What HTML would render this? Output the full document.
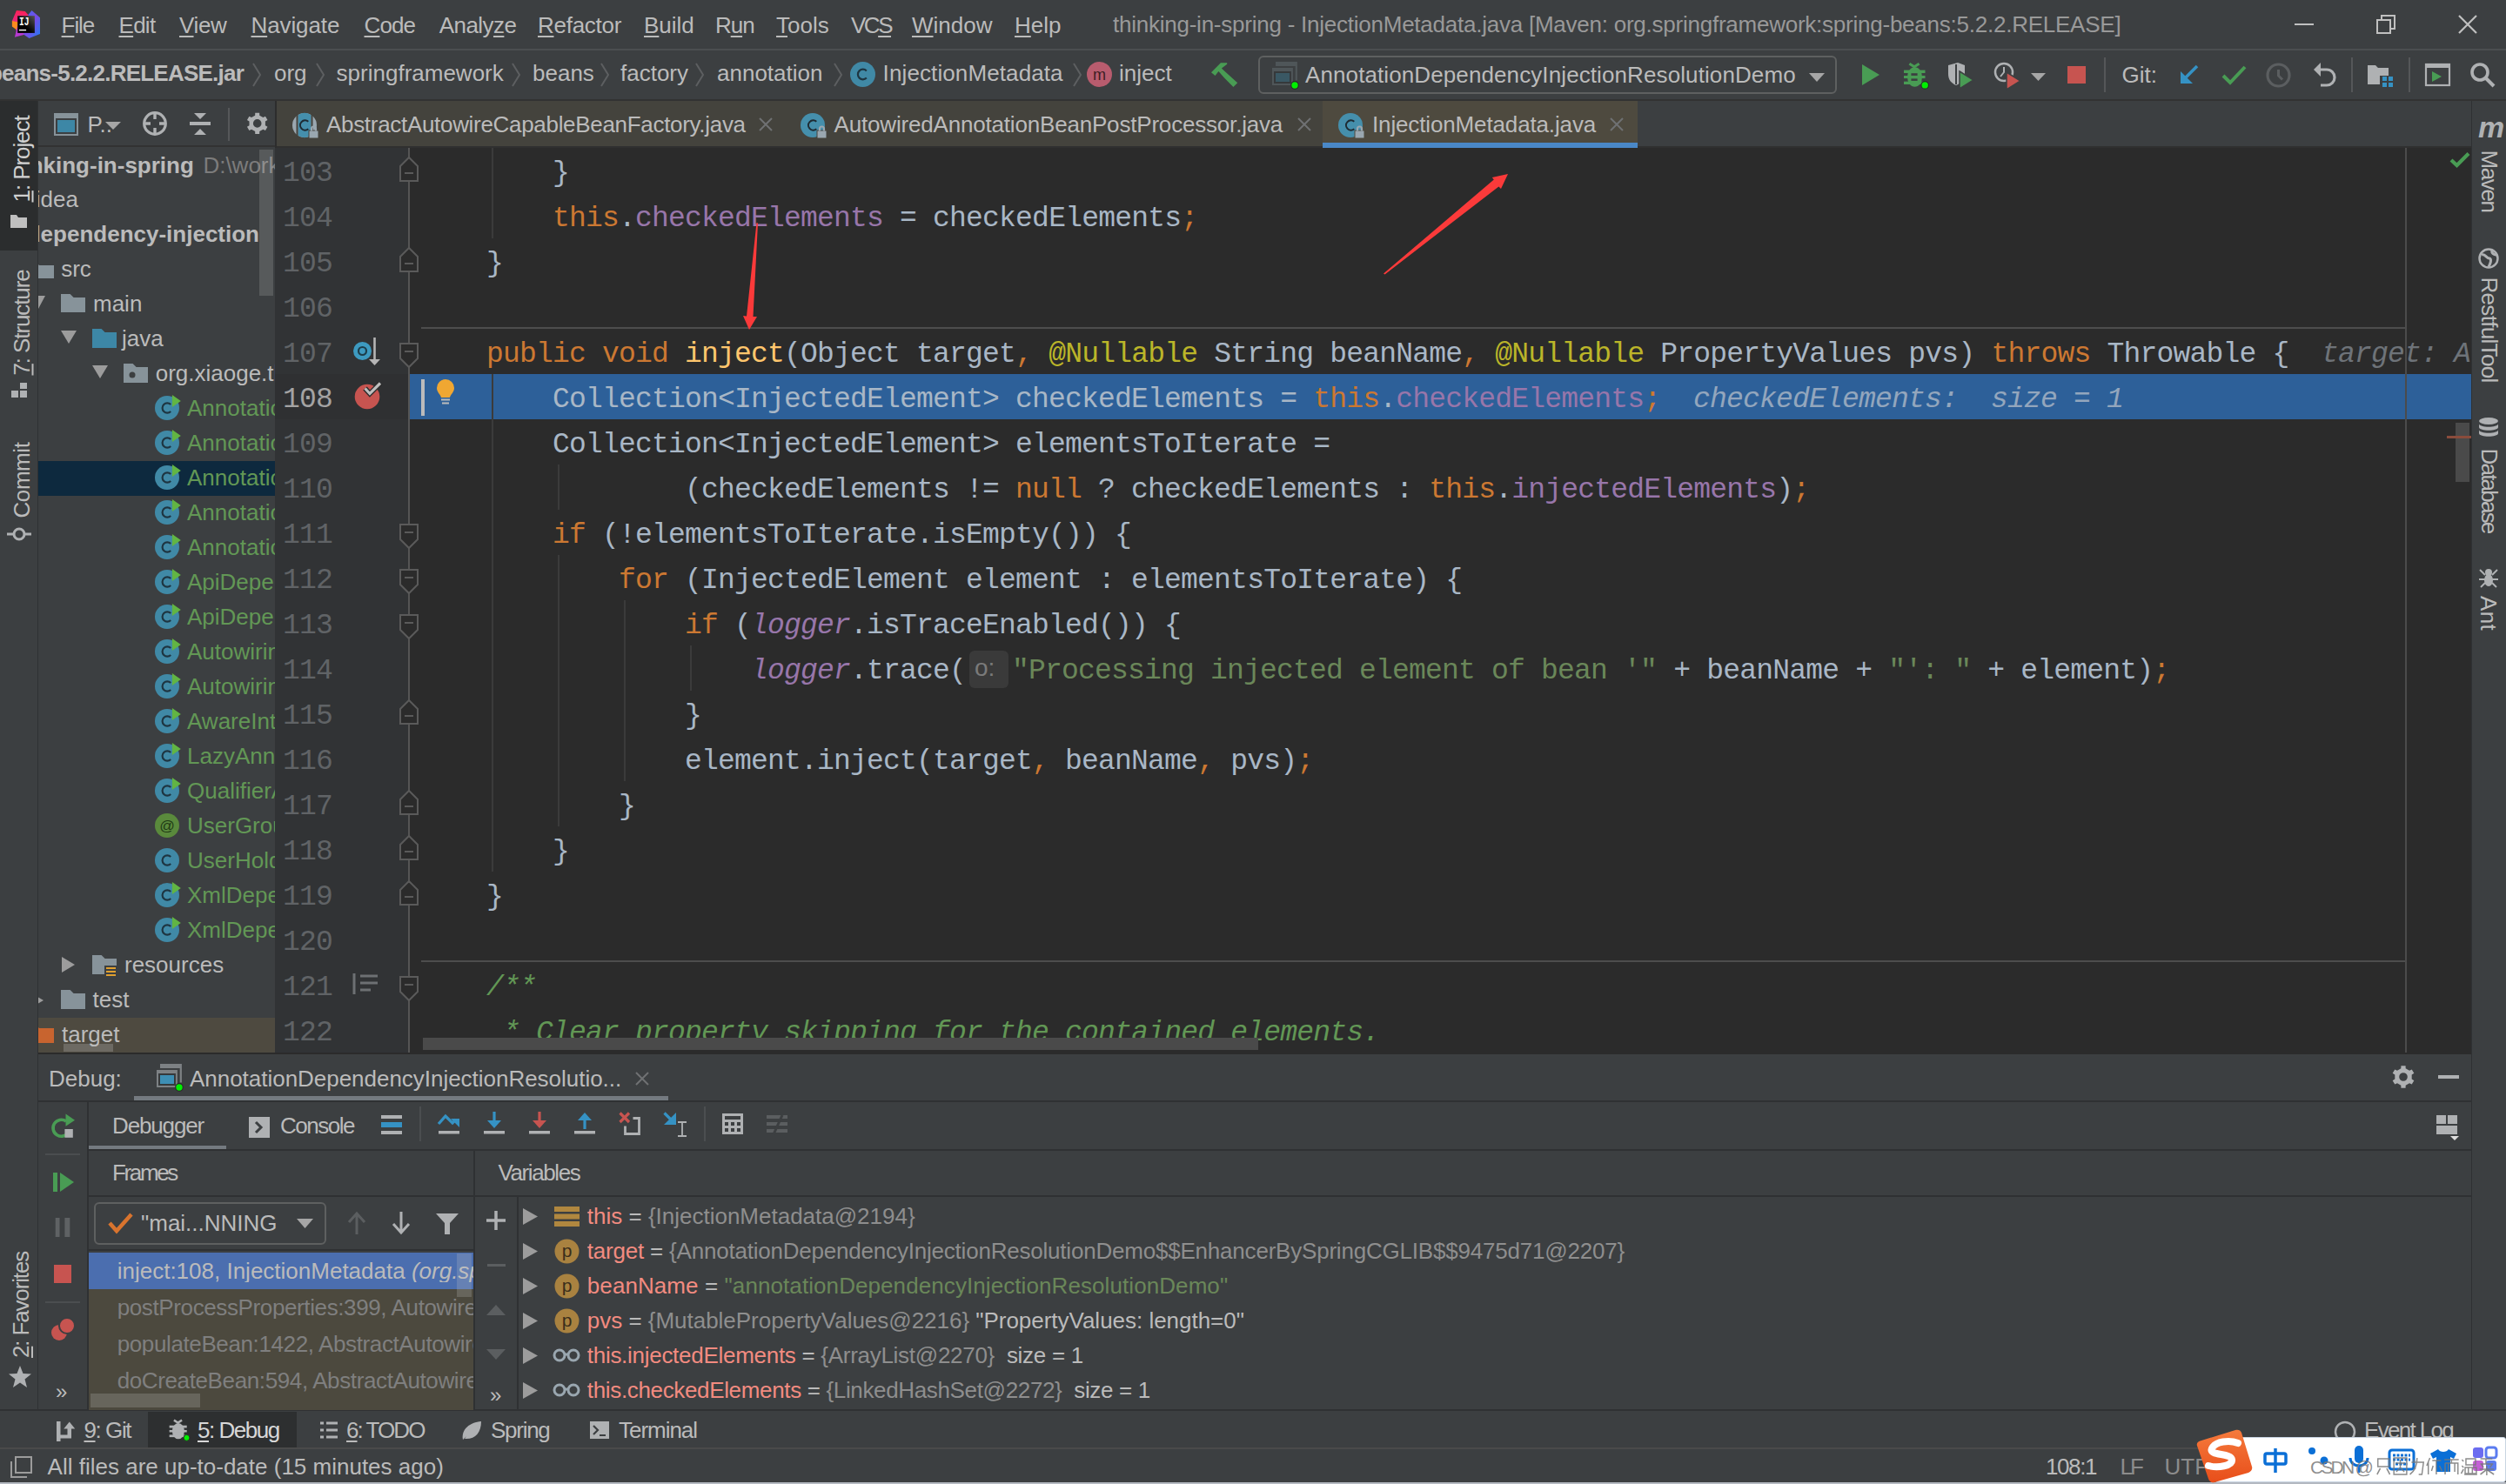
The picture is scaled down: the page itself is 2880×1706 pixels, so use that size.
<!DOCTYPE html>
<html><head><meta charset="utf-8"><title>IntelliJ</title>
<style>
html,body{margin:0;padding:0;}
body{width:2880px;height:1706px;overflow:hidden;position:relative;background:#3c3f41;font-family:"Liberation Sans",sans-serif;}
body div, body svg{position:absolute;}
svg{overflow:visible;}
u{text-decoration:underline;text-decoration-thickness:2px;text-underline-offset:3px;}
</style></head><body>
<div style="left:0px;top:0px;width:2880px;height:56px;background:#3c3f41;"></div>
<div style="left:0px;top:56px;width:2880px;height:2px;background:#4b4e50;"></div>
<div style="left:0px;top:58px;width:2880px;height:56px;background:#3c3f41;"></div>
<div style="left:0px;top:114px;width:2880px;height:2px;background:#323232;"></div>
<div style="left:0px;top:116px;width:43px;height:1505px;background:#3c3f41;"></div>
<div style="left:43px;top:116px;width:1px;height:1505px;background:#2f3133;"></div>
<div style="left:0px;top:116px;width:43px;height:172px;background:#2b2d2e;"></div>
<div style="left:2841px;top:116px;width:39px;height:1505px;background:#3c3f41;"></div>
<div style="left:2840px;top:116px;width:1px;height:1505px;background:#2f3133;"></div>
<div style="left:44px;top:116px;width:272px;height:1094px;background:#3c3f41;"></div>
<div style="left:44px;top:167px;width:272px;height:2px;background:#323232;"></div>
<div style="left:316px;top:116px;width:2524px;height:54px;background:#3c3f41;"></div>
<div style="left:318px;top:116px;width:1202px;height:52px;background:#44433d;"></div>
<div style="left:316px;top:168px;width:2524px;height:2px;background:#303030;"></div>
<div style="left:1520px;top:116px;width:362px;height:48px;background:#4e4a3f;"></div>
<div style="left:1520px;top:164px;width:362px;height:6px;background:#4a88c7;"></div>
<div style="left:316px;top:116px;width:2px;height:54px;background:#2d2d2d;"></div>
<div style="left:316px;top:170px;width:155px;height:1040px;background:#313335;"></div>
<div style="left:471px;top:170px;width:2369px;height:1040px;background:#2b2b2b;"></div>
<div style="left:44px;top:1210px;width:2796px;height:2px;background:#2b2b2b;"></div>
<div style="left:44px;top:1212px;width:2796px;height:409px;background:#3c3f41;"></div>
<div style="left:0px;top:1620px;width:2880px;height:2px;background:#2f3133;"></div>
<div style="left:0px;top:1623px;width:2880px;height:41px;background:#3c3f41;"></div>
<div style="left:0px;top:1664px;width:2880px;height:2px;background:#4a4a4a;"></div>
<div style="left:0px;top:1666px;width:2880px;height:38px;background:#3c3f41;"></div>
<div style="left:0px;top:1704px;width:2880px;height:2px;background:#b4b9c1;"></div>
<div style="left:471px;top:430px;width:2369px;height:52px;background:#2d6099;"></div>
<div style="left:316px;top:430px;width:153px;height:52px;background:#2f3032;"></div>
<div style="left:484px;top:376px;width:2281px;height:2px;background:#4d4d4d;"></div>
<div style="left:484px;top:1104px;width:2281px;height:2px;background:#4d4d4d;"></div>
<div style="left:2764px;top:170px;width:2px;height:1040px;background:#4b4b4b;"></div>
<div style="left:469px;top:170px;width:2px;height:1040px;background:#555555;"></div>
<div style="left:565px;top:170px;width:2px;height:104px;background:#3b3b3b;"></div>
<div style="left:565px;top:430px;width:2px;height:572px;background:#3b3b3b;"></div>
<div style="left:641px;top:534px;width:2px;height:52px;background:#3b3b3b;"></div>
<div style="left:641px;top:638px;width:2px;height:312px;background:#3b3b3b;"></div>
<div style="left:717px;top:690px;width:2px;height:208px;background:#3b3b3b;"></div>
<div style="left:793px;top:742px;width:2px;height:52px;background:#3b3b3b;"></div>
<div style="left:325.0px;top:182.72px;font:normal normal 33px/33px 'Liberation Mono', monospace;color:#606366;white-space:pre;letter-spacing:-0.8000000000000007px;">103</div>
<div style="left:635.0px;top:182.72px;font:normal normal 33px/33px 'Liberation Mono', monospace;color:#a9b7c6;white-space:pre;letter-spacing:-0.8000000000000007px;"><span style="color:#a9b7c6;">}</span></div>
<div style="left:325.0px;top:234.72px;font:normal normal 33px/33px 'Liberation Mono', monospace;color:#606366;white-space:pre;letter-spacing:-0.8000000000000007px;">104</div>
<div style="left:635.0px;top:234.72px;font:normal normal 33px/33px 'Liberation Mono', monospace;color:#a9b7c6;white-space:pre;letter-spacing:-0.8000000000000007px;"><span style="color:#cc7832;">this</span><span style="color:#a9b7c6;">.</span><span style="color:#9876aa;">checkedElements</span><span style="color:#a9b7c6;"> = checkedElements</span><span style="color:#cc7832;">;</span></div>
<div style="left:325.0px;top:286.72px;font:normal normal 33px/33px 'Liberation Mono', monospace;color:#606366;white-space:pre;letter-spacing:-0.8000000000000007px;">105</div>
<div style="left:559.0px;top:286.72px;font:normal normal 33px/33px 'Liberation Mono', monospace;color:#a9b7c6;white-space:pre;letter-spacing:-0.8000000000000007px;"><span style="color:#a9b7c6;">}</span></div>
<div style="left:325.0px;top:338.72px;font:normal normal 33px/33px 'Liberation Mono', monospace;color:#606366;white-space:pre;letter-spacing:-0.8000000000000007px;">106</div>
<div style="left:325.0px;top:390.72px;font:normal normal 33px/33px 'Liberation Mono', monospace;color:#606366;white-space:pre;letter-spacing:-0.8000000000000007px;">107</div>
<div style="left:559.0px;top:390.72px;font:normal normal 33px/33px 'Liberation Mono', monospace;color:#a9b7c6;white-space:pre;letter-spacing:-0.8000000000000007px;"><span style="color:#cc7832;">public void </span><span style="color:#ffc66d;">inject</span><span style="color:#a9b7c6;">(Object target</span><span style="color:#cc7832;">,</span><span style="color:#a9b7c6;"> </span><span style="color:#bbb529;">@Nullable</span><span style="color:#a9b7c6;"> String beanName</span><span style="color:#cc7832;">,</span><span style="color:#a9b7c6;"> </span><span style="color:#bbb529;">@Nullable</span><span style="color:#a9b7c6;"> PropertyValues pvs) </span><span style="color:#cc7832;">throws </span><span style="color:#a9b7c6;">Throwable {</span></div>
<div style="left:325.0px;top:442.72px;font:normal normal 33px/33px 'Liberation Mono', monospace;color:#a4a3a3;white-space:pre;letter-spacing:-0.8000000000000007px;">108</div>
<div style="left:635.0px;top:442.72px;font:normal normal 33px/33px 'Liberation Mono', monospace;color:#a9b7c6;white-space:pre;letter-spacing:-0.8000000000000007px;"><span style="color:#a9b7c6;">Collection&lt;InjectedElement&gt; checkedElements = </span><span style="color:#cc7832;">this</span><span style="color:#a9b7c6;">.</span><span style="color:#9876aa;">checkedElements</span><span style="color:#cc7832;">;</span></div>
<div style="left:325.0px;top:494.72px;font:normal normal 33px/33px 'Liberation Mono', monospace;color:#606366;white-space:pre;letter-spacing:-0.8000000000000007px;">109</div>
<div style="left:635.0px;top:494.72px;font:normal normal 33px/33px 'Liberation Mono', monospace;color:#a9b7c6;white-space:pre;letter-spacing:-0.8000000000000007px;"><span style="color:#a9b7c6;">Collection&lt;InjectedElement&gt; elementsToIterate =</span></div>
<div style="left:325.0px;top:546.72px;font:normal normal 33px/33px 'Liberation Mono', monospace;color:#606366;white-space:pre;letter-spacing:-0.8000000000000007px;">110</div>
<div style="left:787.0px;top:546.72px;font:normal normal 33px/33px 'Liberation Mono', monospace;color:#a9b7c6;white-space:pre;letter-spacing:-0.8000000000000007px;"><span style="color:#a9b7c6;">(checkedElements != </span><span style="color:#cc7832;">null</span><span style="color:#a9b7c6;"> ? checkedElements : </span><span style="color:#cc7832;">this</span><span style="color:#a9b7c6;">.</span><span style="color:#9876aa;">injectedElements</span><span style="color:#a9b7c6;">)</span><span style="color:#cc7832;">;</span></div>
<div style="left:325.0px;top:598.72px;font:normal normal 33px/33px 'Liberation Mono', monospace;color:#606366;white-space:pre;letter-spacing:-0.8000000000000007px;">111</div>
<div style="left:635.0px;top:598.72px;font:normal normal 33px/33px 'Liberation Mono', monospace;color:#a9b7c6;white-space:pre;letter-spacing:-0.8000000000000007px;"><span style="color:#cc7832;">if </span><span style="color:#a9b7c6;">(!elementsToIterate.isEmpty()) {</span></div>
<div style="left:325.0px;top:650.72px;font:normal normal 33px/33px 'Liberation Mono', monospace;color:#606366;white-space:pre;letter-spacing:-0.8000000000000007px;">112</div>
<div style="left:711.0px;top:650.72px;font:normal normal 33px/33px 'Liberation Mono', monospace;color:#a9b7c6;white-space:pre;letter-spacing:-0.8000000000000007px;"><span style="color:#cc7832;">for </span><span style="color:#a9b7c6;">(InjectedElement element : elementsToIterate) {</span></div>
<div style="left:325.0px;top:702.72px;font:normal normal 33px/33px 'Liberation Mono', monospace;color:#606366;white-space:pre;letter-spacing:-0.8000000000000007px;">113</div>
<div style="left:787.0px;top:702.72px;font:normal normal 33px/33px 'Liberation Mono', monospace;color:#a9b7c6;white-space:pre;letter-spacing:-0.8000000000000007px;"><span style="color:#cc7832;">if </span><span style="color:#a9b7c6;">(</span><span style="color:#9876aa;font-style:italic;">logger</span><span style="color:#a9b7c6;">.isTraceEnabled()) {</span></div>
<div style="left:325.0px;top:754.72px;font:normal normal 33px/33px 'Liberation Mono', monospace;color:#606366;white-space:pre;letter-spacing:-0.8000000000000007px;">114</div>
<div style="left:863.0px;top:754.72px;font:normal normal 33px/33px 'Liberation Mono', monospace;color:#a9b7c6;white-space:pre;letter-spacing:-0.8000000000000007px;"><span style="color:#9876aa;font-style:italic;">logger</span><span style="color:#a9b7c6;">.trace(</span></div>
<div style="left:325.0px;top:806.72px;font:normal normal 33px/33px 'Liberation Mono', monospace;color:#606366;white-space:pre;letter-spacing:-0.8000000000000007px;">115</div>
<div style="left:787.0px;top:806.72px;font:normal normal 33px/33px 'Liberation Mono', monospace;color:#a9b7c6;white-space:pre;letter-spacing:-0.8000000000000007px;"><span style="color:#a9b7c6;">}</span></div>
<div style="left:325.0px;top:858.72px;font:normal normal 33px/33px 'Liberation Mono', monospace;color:#606366;white-space:pre;letter-spacing:-0.8000000000000007px;">116</div>
<div style="left:787.0px;top:858.72px;font:normal normal 33px/33px 'Liberation Mono', monospace;color:#a9b7c6;white-space:pre;letter-spacing:-0.8000000000000007px;"><span style="color:#a9b7c6;">element.inject(target</span><span style="color:#cc7832;">,</span><span style="color:#a9b7c6;"> beanName</span><span style="color:#cc7832;">,</span><span style="color:#a9b7c6;"> pvs)</span><span style="color:#cc7832;">;</span></div>
<div style="left:325.0px;top:910.72px;font:normal normal 33px/33px 'Liberation Mono', monospace;color:#606366;white-space:pre;letter-spacing:-0.8000000000000007px;">117</div>
<div style="left:711.0px;top:910.72px;font:normal normal 33px/33px 'Liberation Mono', monospace;color:#a9b7c6;white-space:pre;letter-spacing:-0.8000000000000007px;"><span style="color:#a9b7c6;">}</span></div>
<div style="left:325.0px;top:962.72px;font:normal normal 33px/33px 'Liberation Mono', monospace;color:#606366;white-space:pre;letter-spacing:-0.8000000000000007px;">118</div>
<div style="left:635.0px;top:962.72px;font:normal normal 33px/33px 'Liberation Mono', monospace;color:#a9b7c6;white-space:pre;letter-spacing:-0.8000000000000007px;"><span style="color:#a9b7c6;">}</span></div>
<div style="left:325.0px;top:1014.72px;font:normal normal 33px/33px 'Liberation Mono', monospace;color:#606366;white-space:pre;letter-spacing:-0.8000000000000007px;">119</div>
<div style="left:559.0px;top:1014.72px;font:normal normal 33px/33px 'Liberation Mono', monospace;color:#a9b7c6;white-space:pre;letter-spacing:-0.8000000000000007px;"><span style="color:#a9b7c6;">}</span></div>
<div style="left:325.0px;top:1066.72px;font:normal normal 33px/33px 'Liberation Mono', monospace;color:#606366;white-space:pre;letter-spacing:-0.8000000000000007px;">120</div>
<div style="left:325.0px;top:1118.72px;font:normal normal 33px/33px 'Liberation Mono', monospace;color:#606366;white-space:pre;letter-spacing:-0.8000000000000007px;">121</div>
<div style="left:559.0px;top:1118.72px;font:normal normal 33px/33px 'Liberation Mono', monospace;color:#a9b7c6;white-space:pre;letter-spacing:-0.8000000000000007px;"><span style="color:#629755;font-style:italic;">/**</span></div>
<div style="left:325.0px;top:1170.72px;font:normal normal 33px/33px 'Liberation Mono', monospace;color:#606366;white-space:pre;letter-spacing:-0.8000000000000007px;">122</div>
<div style="left:559.0px;top:1170.72px;font:normal normal 33px/33px 'Liberation Mono', monospace;color:#a9b7c6;white-space:pre;letter-spacing:-0.8000000000000007px;"><span style="color:#629755;font-style:italic;"> * Clear property skipping for the contained elements.</span></div>
<div style="left:1114px;top:748px;width:45px;height:43px;background:#3a3a3a;border-radius:6px;"></div>
<div style="left:1120px;top:754.29px;font:normal normal 28px/28px 'Liberation Sans', sans-serif;color:#7a7a7a;white-space:pre;">o:</div>
<div style="left:1163px;top:754.72px;font:normal normal 33px/33px 'Liberation Mono', monospace;color:#a9b7c6;white-space:pre;letter-spacing:-0.8000000000000007px;"><span style="color:#6a8759;">"Processing injected element of bean '"</span><span style="color:#a9b7c6;"> + beanName + </span><span style="color:#6a8759;">"': "</span><span style="color:#a9b7c6;"> + element)</span><span style="color:#cc7832;">;</span></div>
<div style="left:2668px;top:390.72px;font:normal normal 33px/33px 'Liberation Mono', monospace;color:#bbbbbb;white-space:pre;letter-spacing:-0.8000000000000007px;width:173px;overflow:hidden;"><span style="color:#6e7379;font-style:italic;">target: A</span></div>
<div style="left:1946px;top:442.72px;font:normal normal 33px/33px 'Liberation Mono', monospace;color:#bbbbbb;white-space:pre;letter-spacing:-0.8000000000000007px;"><span style="color:#93a6bd;font-style:italic;">checkedElements:  size = 1</span></div>
<svg style="left:8px;top:6px;" width="48" height="44" viewBox="0 0 48 44"><defs><linearGradient id="lgp" x1="0" y1="0" x2="0" y2="1"><stop offset="0" stop-color="#fe2157"/><stop offset="1" stop-color="#c832a8"/></linearGradient><linearGradient id="lgb" x1="0" y1="0" x2="1" y2="1"><stop offset="0" stop-color="#3a6ff0"/><stop offset="0.5" stop-color="#7a4ae8"/><stop offset="1" stop-color="#1e7ef2"/></linearGradient><linearGradient id="lgk" x1="1" y1="0" x2="0.4" y2="0.6"><stop offset="0" stop-color="#555"/><stop offset="1" stop-color="#000"/></linearGradient></defs><path d="M11 6.1 L20.8 7.1 L25.2 11.9 L22 30 L12 32 L5.9 18.1 Z" fill="url(#lgp)"/><path d="M5.9 18.1 L13 19.5 L12 29 L5.9 24.6 Z" fill="#fc8a1e"/><path d="M12 24 L21 33.5 L8.9 36.8 Z" fill="#b63ad0"/><path d="M28.5 5.9 L38 14.2 V32.9 L25.5 38 L19 33.5 L24.6 10.7 Z" fill="url(#lgb)"/><rect x="12.2" y="12.2" width="19.7" height="19.7" fill="url(#lgk)"/><text x="14" y="23" font-family="Liberation Mono" font-weight="bold" font-size="13" textLength="11.5" lengthAdjust="spacingAndGlyphs" fill="#fff">IJ</text><rect x="13.9" y="27.9" width="8.2" height="1.4" fill="#fff"/></svg>
<div style="left:70.6px;top:15.99px;font:normal normal 26px/26px 'Liberation Sans', sans-serif;color:#bbbbbb;white-space:pre;letter-spacing:-1.073px;"><u>F</u>ile</div>
<div style="left:136.5px;top:15.99px;font:normal normal 26px/26px 'Liberation Sans', sans-serif;color:#bbbbbb;white-space:pre;letter-spacing:-0.724px;"><u>E</u>dit</div>
<div style="left:206px;top:15.99px;font:normal normal 26px/26px 'Liberation Sans', sans-serif;color:#bbbbbb;white-space:pre;letter-spacing:-0.348px;"><u>V</u>iew</div>
<div style="left:288.5px;top:15.99px;font:normal normal 26px/26px 'Liberation Sans', sans-serif;color:#bbbbbb;white-space:pre;letter-spacing:-0.112px;"><u>N</u>avigate</div>
<div style="left:418.5px;top:15.99px;font:normal normal 26px/26px 'Liberation Sans', sans-serif;color:#bbbbbb;white-space:pre;letter-spacing:-0.86px;"><u>C</u>ode</div>
<div style="left:504.7px;top:15.99px;font:normal normal 26px/26px 'Liberation Sans', sans-serif;color:#bbbbbb;white-space:pre;letter-spacing:-0.555px;">Analy<u>z</u>e</div>
<div style="left:618px;top:15.99px;font:normal normal 26px/26px 'Liberation Sans', sans-serif;color:#bbbbbb;white-space:pre;letter-spacing:-0.279px;"><u>R</u>efactor</div>
<div style="left:740px;top:15.99px;font:normal normal 26px/26px 'Liberation Sans', sans-serif;color:#bbbbbb;white-space:pre;"><u>B</u>uild</div>
<div style="left:822px;top:15.99px;font:normal normal 26px/26px 'Liberation Sans', sans-serif;color:#bbbbbb;white-space:pre;letter-spacing:-1.062px;">R<u>u</u>n</div>
<div style="left:892px;top:15.99px;font:normal normal 26px/26px 'Liberation Sans', sans-serif;color:#bbbbbb;white-space:pre;"><u>T</u>ools</div>
<div style="left:978px;top:15.99px;font:normal normal 26px/26px 'Liberation Sans', sans-serif;color:#bbbbbb;white-space:pre;letter-spacing:-2.49px;">VC<u>S</u></div>
<div style="left:1048px;top:15.99px;font:normal normal 26px/26px 'Liberation Sans', sans-serif;color:#bbbbbb;white-space:pre;"><u>W</u>indow</div>
<div style="left:1166px;top:15.99px;font:normal normal 26px/26px 'Liberation Sans', sans-serif;color:#bbbbbb;white-space:pre;"><u>H</u>elp</div>
<div style="left:1279px;top:14.99px;font:normal normal 26px/26px 'Liberation Sans', sans-serif;color:#999999;white-space:pre;letter-spacing:-0.24px;">thinking-in-spring - InjectionMetadata.java [Maven: org.springframework:spring-beans:5.2.2.RELEASE]</div>
<svg style="left:2637px;top:26px;" width="22" height="4" viewBox="0 0 22 4"><rect x="0" y="1" width="22" height="2" fill="#c0c0c0"/></svg>
<svg style="left:2731px;top:17px;" width="22" height="22" viewBox="0 0 22 22"><path d="M1 6 H16 V21 H1 Z M6 6 V1 H21 V16 H16" fill="none" stroke="#c0c0c0" stroke-width="2"/></svg>
<svg style="left:2825px;top:17px;" width="22" height="22" viewBox="0 0 22 22"><path d="M1 1 L21 21 M21 1 L1 21" stroke="#c0c0c0" stroke-width="2.2"/></svg>
<div style="left:0;top:58px;width:290px;height:56px;overflow:hidden;">
<div style="left:-13px;top:12.99px;font:normal bold 26px/26px 'Liberation Sans', sans-serif;color:#bbbbbb;white-space:pre;letter-spacing:-0.766px;">beans-5.2.2.RELEASE.jar</div>
</div>
<svg style="left:289px;top:72px;" width="12" height="28" viewBox="0 0 12 28"><path d="M2 1 L10 14 L2 27" fill="none" stroke="#5d5f61" stroke-width="2"/></svg>
<div style="left:315px;top:70.99px;font:normal normal 26px/26px 'Liberation Sans', sans-serif;color:#bbbbbb;white-space:pre;">org</div>
<svg style="left:362px;top:72px;" width="12" height="28" viewBox="0 0 12 28"><path d="M2 1 L10 14 L2 27" fill="none" stroke="#5d5f61" stroke-width="2"/></svg>
<div style="left:386.6px;top:70.99px;font:normal normal 26px/26px 'Liberation Sans', sans-serif;color:#bbbbbb;white-space:pre;">springframework</div>
<svg style="left:587px;top:72px;" width="12" height="28" viewBox="0 0 12 28"><path d="M2 1 L10 14 L2 27" fill="none" stroke="#5d5f61" stroke-width="2"/></svg>
<div style="left:612px;top:70.99px;font:normal normal 26px/26px 'Liberation Sans', sans-serif;color:#bbbbbb;white-space:pre;">beans</div>
<svg style="left:689px;top:72px;" width="12" height="28" viewBox="0 0 12 28"><path d="M2 1 L10 14 L2 27" fill="none" stroke="#5d5f61" stroke-width="2"/></svg>
<div style="left:713px;top:70.99px;font:normal normal 26px/26px 'Liberation Sans', sans-serif;color:#bbbbbb;white-space:pre;">factory</div>
<svg style="left:798px;top:72px;" width="12" height="28" viewBox="0 0 12 28"><path d="M2 1 L10 14 L2 27" fill="none" stroke="#5d5f61" stroke-width="2"/></svg>
<div style="left:824px;top:70.99px;font:normal normal 26px/26px 'Liberation Sans', sans-serif;color:#bbbbbb;white-space:pre;">annotation</div>
<svg style="left:957px;top:72px;" width="12" height="28" viewBox="0 0 12 28"><path d="M2 1 L10 14 L2 27" fill="none" stroke="#5d5f61" stroke-width="2"/></svg>
<svg style="left:977px;top:71px;" width="29" height="29" viewBox="0 0 29 29"><circle cx="14.5" cy="14.5" r="14.5" fill="#4089a6"/><path d="M18.85 10.44 A5.80 5.80 0 1 0 18.85 18.56" fill="none" stroke="#1e3541" stroke-width="2.2"/></svg>
<div style="left:1014.6px;top:70.99px;font:normal normal 26px/26px 'Liberation Sans', sans-serif;color:#bbbbbb;white-space:pre;letter-spacing:0.108px;">InjectionMetadata</div>
<svg style="left:1232px;top:72px;" width="12" height="28" viewBox="0 0 12 28"><path d="M2 1 L10 14 L2 27" fill="none" stroke="#5d5f61" stroke-width="2"/></svg>
<svg style="left:1249px;top:71px;" width="29" height="29" viewBox="0 0 29 29"><circle cx="14.5" cy="14.5" r="14.5" fill="#b85c6e"/><text x="14.5" y="20.9" text-anchor="middle" font-family="Liberation Sans" font-size="18.0" fill="#3d1e24">m</text></svg>
<div style="left:1286px;top:70.99px;font:normal normal 26px/26px 'Liberation Sans', sans-serif;color:#bbbbbb;white-space:pre;">inject</div>
<svg style="left:1388px;top:68px;" width="40" height="36" viewBox="0 0 40 36"><path d="M4 15.2 L14.9 4.3 H22.2 V5.7 L16.6 9.9 L16 10.7 L34.2 27.2 L29.4 32 L19 21.6 L12.4 14 L8.5 19.1 Z" fill="#499c54"/></svg>
<div style="left:1446px;top:64px;width:661px;height:40px;border:2px solid #5e6060;border-radius:6px;"></div>
<svg style="left:1460px;top:70px;" width="34" height="34" viewBox="0 0 34 34"><path d="M6 2 H29.8 V22.4" fill="none" stroke="#4f5659" stroke-width="2.2"/><rect x="6" y="2" width="23.8" height="4" fill="#4f5659"/><rect x="2" y="8" width="23.9" height="20" fill="#4f5659"/><rect x="4" y="12" width="19.9" height="14" fill="#36393b"/><rect x="6" y="14" width="16" height="10" fill="#3a5864"/><circle cx="28" cy="28" r="4.3" fill="#00f000" stroke="#2b2b2b" stroke-width="1.2"/></svg>
<div style="left:1500px;top:72.99px;font:normal normal 26px/26px 'Liberation Sans', sans-serif;color:#bbbbbb;white-space:pre;letter-spacing:0.102px;">AnnotationDependencyInjectionResolutionDemo</div>
<svg style="left:2079px;top:84px;" width="18" height="10" viewBox="0 0 18 10"><path d="M0 0 H18 L9 10 Z" fill="#a6a6a6"/></svg>
<svg style="left:2140px;top:74px;" width="20" height="24" viewBox="0 0 20 24"><path d="M0 0 L20 12 L0 24 Z" fill="#499c54"/></svg>
<svg style="left:2186px;top:70px;" width="32" height="34" viewBox="0 0 32 34"><path d="M8.4 3.2 L14 6.8 L19.6 3.2" fill="none" stroke="#499c54" stroke-width="3"/><ellipse cx="14.5" cy="18.5" rx="8.5" ry="11.2" fill="#499c54"/><rect x="2" y="10.6" width="24.5" height="3.4" fill="#499c54"/><rect x="2" y="17" width="24.5" height="3.1" fill="#499c54"/><rect x="2" y="23.7" width="24.5" height="3.3" fill="#499c54"/><rect x="10.4" y="14.2" width="7.2" height="2.7" fill="#3c3f41"/><rect x="10.4" y="20.4" width="7.2" height="2.5" fill="#3c3f41"/><circle cx="26.2" cy="27.9" r="4.3" fill="#00f000" stroke="#2b2b2b" stroke-width="1.2"/></svg>
<svg style="left:2237px;top:72px;" width="32" height="30" viewBox="0 0 32 30"><path d="M2 3 L13 0 L21 3 V13 C21 20 16 24 11 26 C6 24 2 20 2 13 Z" fill="#afb1b3"/><path d="M11 2 V25" stroke="#3c3f41" stroke-width="2"/><path d="M15 10 L31 20 L15 30 Z" fill="#499c54" stroke="#3c3f41" stroke-width="1.5"/></svg>
<svg style="left:2291px;top:71px;" width="32" height="32" viewBox="0 0 32 32"><circle cx="12" cy="12" r="10" fill="none" stroke="#afb1b3" stroke-width="2.5"/><path d="M12 6 V12 L8 17" fill="none" stroke="#afb1b3" stroke-width="2"/><path d="M15 12 L31 22 L15 32 Z" fill="#c75450" stroke="#3c3f41" stroke-width="1.5"/></svg>
<svg style="left:2334px;top:84px;" width="17" height="9" viewBox="0 0 17 9"><path d="M0 0 H17 L8.5 9 Z" fill="#a6a6a6"/></svg>
<div style="left:2376px;top:76px;width:21px;height:20px;background:#c75450;"></div>
<div style="left:2418px;top:66px;width:2px;height:40px;background:#555759;"></div>
<div style="left:2438.5px;top:72.99px;font:normal normal 26px/26px 'Liberation Sans', sans-serif;color:#bbbbbb;white-space:pre;">Git:</div>
<svg style="left:2503px;top:74px;" width="24" height="24" viewBox="0 0 24 24"><path d="M22 2 L8 16" stroke="#3592c4" stroke-width="3.5"/><path d="M3 8 V22 H17 Z" fill="#3592c4"/></svg>
<svg style="left:2553px;top:74px;" width="29" height="24" viewBox="0 0 29 24"><path d="M2 13 L10 21 L27 3" fill="none" stroke="#499c54" stroke-width="4"/></svg>
<svg style="left:2604px;top:72px;" width="29" height="29" viewBox="0 0 29 29"><circle cx="14.5" cy="14.5" r="12.5" fill="none" stroke="#5b5e60" stroke-width="3.2"/><path d="M14.5 8 V15 L19 19.5" fill="none" stroke="#5b5e60" stroke-width="3"/></svg>
<svg style="left:2658px;top:72px;" width="28" height="28" viewBox="0 0 28 28"><path d="M9 0 L1 8 L9 16 Z" fill="#afb1b3"/><path d="M7 8 H16 A9 9 0 0 1 16 26 H9" fill="none" stroke="#afb1b3" stroke-width="3.2"/></svg>
<div style="left:2702px;top:66px;width:2px;height:40px;background:#555759;"></div>
<svg style="left:2721px;top:73px;" width="30" height="28" viewBox="0 0 30 28"><path d="M0 2 H9 L12 5 H24 V14 H14 V24 H0 Z" fill="#afb1b3"/><rect x="17" y="15" width="5" height="5" fill="#3592c4"/><rect x="24" y="15" width="5" height="5" fill="#3592c4"/><rect x="17" y="22" width="5" height="5" fill="#3592c4"/><rect x="24" y="22" width="5" height="5" fill="#3592c4"/></svg>
<div style="left:2768px;top:66px;width:2px;height:40px;background:#555759;"></div>
<svg style="left:2787px;top:73px;" width="30" height="27" viewBox="0 0 30 27"><rect x="1" y="1" width="27" height="24" fill="none" stroke="#afb1b3" stroke-width="2.2"/><rect x="1" y="1" width="27" height="4" fill="#afb1b3"/><path d="M8 9 L19 15 L8 21 Z" fill="#499c54"/></svg>
<svg style="left:2839px;top:72px;" width="30" height="30" viewBox="0 0 30 30"><circle cx="11" cy="11" r="9" fill="none" stroke="#afb1b3" stroke-width="3.6"/><path d="M17.5 17.5 L27 27" stroke="#afb1b3" stroke-width="4"/></svg>
<svg style="left:336px;top:130px;" width="30" height="30" viewBox="0 0 30 30"><circle cx="14" cy="14" r="14" fill="#9aa7b0"/><path d="M6.5 2.2 A14 14 0 0 1 21.5 2.2 V25.8 A14 14 0 0 1 6.5 25.8 Z" fill="#458fac"/><path d="M5.5 0 V28 M22.5 0 V28" stroke="#44433d" stroke-width="2"/><path d="M18.3 9.8 A5.6 5.6 0 1 0 18.3 18.2" fill="none" stroke="#1e2b33" stroke-width="2.1"/><rect x="19" y="20" width="11" height="9" fill="#9aa7b0" stroke="#44433d" stroke-width="1"/><path d="M22 20.5 V18 A2.5 2.5 0 0 1 27 18 V20.5" fill="none" stroke="#9aa7b0" stroke-width="2.2"/></svg>
<div style="left:375px;top:130.29px;font:normal normal 26px/26px 'Liberation Sans', sans-serif;color:#bbbbbb;white-space:pre;letter-spacing:-0.309px;">AbstractAutowireCapableBeanFactory.java</div>
<svg style="left:872px;top:135px;" width="16" height="16" viewBox="0 0 16 16"><path d="M1 1 L15 15 M15 1 L1 15" stroke="#6f7173" stroke-width="2"/></svg>
<svg style="left:920px;top:130px;" width="30" height="30" viewBox="0 0 30 30"><circle cx="14" cy="14" r="14" fill="#458fac"/><path d="M18.3 9.8 A5.6 5.6 0 1 0 18.3 18.2" fill="none" stroke="#1e2b33" stroke-width="2.1"/><rect x="19" y="20" width="11" height="9" fill="#9aa7b0" stroke="#44433d" stroke-width="1"/><path d="M22 20.5 V18 A2.5 2.5 0 0 1 27 18 V20.5" fill="none" stroke="#9aa7b0" stroke-width="2.2"/></svg>
<div style="left:958.6px;top:130.29px;font:normal normal 26px/26px 'Liberation Sans', sans-serif;color:#bbbbbb;white-space:pre;letter-spacing:-0.187px;">AutowiredAnnotationBeanPostProcessor.java</div>
<svg style="left:1491px;top:135px;" width="16" height="16" viewBox="0 0 16 16"><path d="M1 1 L15 15 M15 1 L1 15" stroke="#6f7173" stroke-width="2"/></svg>
<svg style="left:1538px;top:130px;" width="30" height="30" viewBox="0 0 30 30"><circle cx="14" cy="14" r="14" fill="#458fac"/><path d="M18.3 9.8 A5.6 5.6 0 1 0 18.3 18.2" fill="none" stroke="#1e2b33" stroke-width="2.1"/><rect x="19" y="20" width="11" height="9" fill="#9aa7b0" stroke="#4e4a3f" stroke-width="1"/><path d="M22 20.5 V18 A2.5 2.5 0 0 1 27 18 V20.5" fill="none" stroke="#9aa7b0" stroke-width="2.2"/></svg>
<div style="left:1577px;top:130.29px;font:normal normal 26px/26px 'Liberation Sans', sans-serif;color:#bbbbbb;white-space:pre;letter-spacing:-0.14px;">InjectionMetadata.java</div>
<svg style="left:1850px;top:135px;" width="16" height="16" viewBox="0 0 16 16"><path d="M1 1 L15 15 M15 1 L1 15" stroke="#6f7173" stroke-width="2"/></svg>
<svg style="left:62px;top:130px;" width="28" height="26" viewBox="0 0 28 26"><rect x="0" y="0" width="28" height="26" fill="#87939a"/><rect x="2" y="6" width="24" height="18" fill="#3c3f41"/><rect x="4" y="8" width="20" height="14" fill="#3d87a6"/></svg>
<div style="left:100.6px;top:129.99px;font:normal normal 26px/26px 'Liberation Sans', sans-serif;color:#bbbbbb;white-space:pre;">P..</div>
<svg style="left:121px;top:140px;" width="18" height="9" viewBox="0 0 18 9"><path d="M0 0 H18 L9 9 Z" fill="#a6a6a6"/></svg>
<svg style="left:163px;top:127px;" width="30" height="30" viewBox="0 0 30 30"><circle cx="15" cy="15" r="12.3" fill="none" stroke="#afb1b3" stroke-width="3.2"/><path d="M15 3 V10 M15 20 V27 M3 15 H10 M20 15 H27" stroke="#afb1b3" stroke-width="3.4"/></svg>
<svg style="left:217px;top:129px;" width="26" height="28" viewBox="0 0 26 28"><rect x="1" y="11" width="24" height="4" fill="#afb1b3"/><path d="M6 1 H20 L13 8 Z M6 26 H20 L13 19 Z" fill="#afb1b3"/></svg>
<div style="left:262px;top:124px;width:2px;height:38px;background:#555759;"></div>
<svg style="left:282px;top:128px;" width="28" height="28" viewBox="0 0 28 28"><path fill="#afb1b3" fill-rule="evenodd" d="M11.16 4.75 L11.23 1.75 L16.17 1.75 L16.24 4.75 L20.36 7.12 L22.99 5.69 L25.46 9.96 L22.90 11.53 L22.90 16.27 L25.46 17.84 L22.99 22.11 L20.36 20.68 L16.24 23.05 L16.17 26.05 L11.23 26.05 L11.16 23.05 L7.04 20.68 L4.41 22.11 L1.94 17.84 L4.50 16.27 L4.50 11.53 L1.94 9.96 L4.41 5.69 L7.04 7.12 Z M13.7 9.100000000000001 A4.8 4.8 0 1 0 13.7 18.7 A4.8 4.8 0 1 0 13.7 9.100000000000001 Z"/></svg>
<div style="left:-25.5px;top:167.5px;width:99px;height:30px;font:26px/30px 'Liberation Sans', sans-serif;color:#d0d0d0;white-space:pre;text-align:center;transform:rotate(-90deg);letter-spacing:-1.080px;"><u>1</u>: Project</div>
<svg style="left:12px;top:245px;" width="20" height="18" viewBox="0 0 20 18"><path d="M0 2 H7 L9 5 H19 V17 H0 Z" fill="#c0c0c0"/></svg>
<div style="left:-36.5px;top:355.5px;width:121px;height:30px;font:26px/30px 'Liberation Sans', sans-serif;color:#bbbbbb;white-space:pre;text-align:center;transform:rotate(-90deg);letter-spacing:-1.112px;"><u>7</u>: Structure</div>
<svg style="left:13px;top:440px;" width="18" height="18" viewBox="0 0 18 18"><rect x="0" y="9" width="8" height="8" fill="#afb1b3"/><rect x="10" y="9" width="8" height="8" fill="#afb1b3"/><rect x="10" y="0" width="8" height="7" fill="#afb1b3"/></svg>
<div style="left:-19.5px;top:536.5px;width:87px;height:30px;font:26px/30px 'Liberation Sans', sans-serif;color:#bbbbbb;white-space:pre;text-align:center;transform:rotate(-90deg);letter-spacing:-0.424px;">Commit</div>
<svg style="left:8px;top:604px;" width="28" height="20" viewBox="0 0 28 20"><circle cx="14" cy="10" r="6" fill="none" stroke="#afb1b3" stroke-width="3"/><path d="M0 10 H8 M20 10 H28" stroke="#afb1b3" stroke-width="3"/></svg>
<div style="left:-37.0px;top:1485.0px;width:122px;height:30px;font:26px/30px 'Liberation Sans', sans-serif;color:#bbbbbb;white-space:pre;text-align:center;transform:rotate(-90deg);letter-spacing:-1.148px;"><u>2</u>: Favorites</div>
<svg style="left:9px;top:1569px;" width="28" height="27" viewBox="0 0 28 27"><path d="M14 1 L17.5 10 L27 10.5 L19.5 16.5 L22 26 L14 20.5 L6 26 L8.5 16.5 L1 10.5 L10.5 10 Z" fill="#afb1b3"/></svg>
<div style="left:2848px;top:129.21px;font:italic bold 34px/34px 'Liberation Sans', sans-serif;color:#afb1b3;white-space:pre;">m</div>
<div style="left:2824.5px;top:192.5px;width:71px;height:30px;font:26px/30px 'Liberation Sans', sans-serif;color:#bbbbbb;white-space:pre;text-align:center;transform:rotate(90deg);letter-spacing:-1.403px;">Maven</div>
<svg style="left:2848px;top:285px;" width="24" height="24" viewBox="0 0 24 24"><circle cx="12" cy="12" r="10.5" fill="none" stroke="#afb1b3" stroke-width="2.5"/><path d="M4 8 C8 6 9 12 13 12 C16 13 14 18 12 22 M16 3 C15 6 18 8 21 8" fill="none" stroke="#afb1b3" stroke-width="3"/></svg>
<div style="left:2799.5px;top:363.5px;width:121px;height:30px;font:26px/30px 'Liberation Sans', sans-serif;color:#bbbbbb;white-space:pre;text-align:center;transform:rotate(90deg);letter-spacing:-0.690px;">RestfulTool</div>
<svg style="left:2848px;top:480px;" width="24" height="24" viewBox="0 0 24 24"><ellipse cx="12" cy="4" rx="11" ry="4" fill="#afb1b3"/><path d="M1 7 C1 12 23 12 23 7 V11 C23 16 1 16 1 11 Z M1 14 C1 19 23 19 23 14 V18 C23 23 1 23 1 18 Z" fill="#afb1b3"/></svg>
<div style="left:2811.5px;top:548.5px;width:97px;height:30px;font:26px/30px 'Liberation Sans', sans-serif;color:#bbbbbb;white-space:pre;text-align:center;transform:rotate(90deg);letter-spacing:-1.783px;">Database</div>
<svg style="left:2848px;top:652px;" width="24" height="24" viewBox="0 0 24 24"><circle cx="12" cy="6" r="4" fill="#afb1b3"/><ellipse cx="12" cy="15" rx="5" ry="7" fill="#afb1b3"/><path d="M2 3 L8 9 M22 3 L16 9 M1 14 H23 M3 23 L8 18 M21 23 L16 18" stroke="#afb1b3" stroke-width="2"/></svg>
<div style="left:2840.0px;top:690.0px;width:40px;height:30px;font:26px/30px 'Liberation Sans', sans-serif;color:#bbbbbb;white-space:pre;text-align:center;transform:rotate(90deg);letter-spacing:0.328px;">Ant</div>
<div style="left:44px;top:169px;width:272px;height:1041px;overflow:hidden;">
<div style="left:0px;top:361px;width:272px;height:40px;background:#0d293e;"></div>
<div style="left:0px;top:1001px;width:272px;height:40px;background:#4e4a40;"></div>
<div style="left:-42.125px;top:7.99px;font:normal bold 26px/26px 'Liberation Sans', sans-serif;color:#bbbbbb;white-space:pre;">thinking-in-spring</div>
<div style="left:189.4px;top:7.99px;font:normal normal 26px/26px 'Liberation Sans', sans-serif;color:#7c7c7c;white-space:pre;">D:\work\idea</div>
<div style="left:-10.399999999999999px;top:46.99px;font:normal normal 26px/26px 'Liberation Sans', sans-serif;color:#bbbbbb;white-space:pre;">.idea</div>
<div style="left:-13.274999999999999px;top:86.99px;font:normal bold 26px/26px 'Liberation Sans', sans-serif;color:#bbbbbb;white-space:pre;">dependency-injection</div>
<svg style="left:-14px;top:133px;" width="32" height="18" viewBox="0 0 32 18"><path d="M0 0 H12 L15 3 H32 V18 H0 Z" fill="#87939a"/></svg>
<div style="left:26.200000000000003px;top:126.99px;font:normal normal 26px/26px 'Liberation Sans', sans-serif;color:#bbbbbb;white-space:pre;">src</div>
<svg style="left:-8px;top:171px;" width="16" height="15" viewBox="0 0 16 15"><path d="M0 0 H16 L8 15 Z" fill="#9c9c9c"/></svg>
<svg style="left:26px;top:169px;" width="28" height="21" viewBox="0 0 28 21"><path d="M0 0 H10.6 L14.6 4 H28 V21 H0 Z" fill="#87939a"/></svg>
<div style="left:63px;top:166.99px;font:normal normal 26px/26px 'Liberation Sans', sans-serif;color:#bbbbbb;white-space:pre;">main</div>
<svg style="left:26px;top:211px;" width="18" height="15" viewBox="0 0 18 15"><path d="M0 0 H18 L9.0 15 Z" fill="#9c9c9c"/></svg>
<svg style="left:62px;top:209px;" width="28" height="22" viewBox="0 0 28 22"><path d="M0 0 H10.6 L14.6 4 H28 V22 H0 Z" fill="#3d87a6"/></svg>
<div style="left:96px;top:206.99px;font:normal normal 26px/26px 'Liberation Sans', sans-serif;color:#bbbbbb;white-space:pre;">java</div>
<svg style="left:62px;top:251px;" width="18" height="15" viewBox="0 0 18 15"><path d="M0 0 H18 L9.0 15 Z" fill="#9c9c9c"/></svg>
<svg style="left:98px;top:249px;" width="28" height="22" viewBox="0 0 28 22"><path d="M0 0 H10.6 L14.6 4 H28 V22 H0 Z" fill="#87939a"/><circle cx="10" cy="13" r="3.5" fill="#3c3f41"/></svg>
<div style="left:134.7px;top:246.99px;font:normal normal 26px/26px 'Liberation Sans', sans-serif;color:#bbbbbb;white-space:pre;">org.xiaoge.thinking.in.spring</div>
<svg style="left:134px;top:286px;" width="28" height="28" viewBox="0 0 28 28"><circle cx="14.0" cy="14.0" r="14.0" fill="#4089a6"/><path d="M18.20 10.08 A5.60 5.60 0 1 0 18.20 17.92" fill="none" stroke="#1e3541" stroke-width="2.2"/><path d="M19.88 -1.12 L29.82 5.88 L19.88 12.88 Z" fill="#62b543"/></svg>
<div style="left:171px;top:286.99px;font:normal normal 26px/26px 'Liberation Sans', sans-serif;color:#629755;white-space:pre;">AnnotationDependencyInjectionResolutionDemo</div>
<svg style="left:134px;top:326px;" width="28" height="28" viewBox="0 0 28 28"><circle cx="14.0" cy="14.0" r="14.0" fill="#4089a6"/><path d="M18.20 10.08 A5.60 5.60 0 1 0 18.20 17.92" fill="none" stroke="#1e3541" stroke-width="2.2"/><path d="M19.88 -1.12 L29.82 5.88 L19.88 12.88 Z" fill="#62b543"/></svg>
<div style="left:171px;top:326.99px;font:normal normal 26px/26px 'Liberation Sans', sans-serif;color:#629755;white-space:pre;">AnnotationDependencySetterInjectionDemo</div>
<svg style="left:134px;top:366px;" width="28" height="28" viewBox="0 0 28 28"><circle cx="14.0" cy="14.0" r="14.0" fill="#4089a6"/><path d="M18.20 10.08 A5.60 5.60 0 1 0 18.20 17.92" fill="none" stroke="#1e3541" stroke-width="2.2"/><path d="M19.88 -1.12 L29.82 5.88 L19.88 12.88 Z" fill="#62b543"/></svg>
<div style="left:171px;top:366.99px;font:normal normal 26px/26px 'Liberation Sans', sans-serif;color:#629755;white-space:pre;">AnnotationDependencyInjectionDemo</div>
<svg style="left:134px;top:406px;" width="28" height="28" viewBox="0 0 28 28"><circle cx="14.0" cy="14.0" r="14.0" fill="#4089a6"/><path d="M18.20 10.08 A5.60 5.60 0 1 0 18.20 17.92" fill="none" stroke="#1e3541" stroke-width="2.2"/><path d="M19.88 -1.12 L29.82 5.88 L19.88 12.88 Z" fill="#62b543"/></svg>
<div style="left:171px;top:406.99px;font:normal normal 26px/26px 'Liberation Sans', sans-serif;color:#629755;white-space:pre;">AnnotationDependencyFieldInjectionDemo</div>
<svg style="left:134px;top:446px;" width="28" height="28" viewBox="0 0 28 28"><circle cx="14.0" cy="14.0" r="14.0" fill="#4089a6"/><path d="M18.20 10.08 A5.60 5.60 0 1 0 18.20 17.92" fill="none" stroke="#1e3541" stroke-width="2.2"/><path d="M19.88 -1.12 L29.82 5.88 L19.88 12.88 Z" fill="#62b543"/></svg>
<div style="left:171px;top:446.99px;font:normal normal 26px/26px 'Liberation Sans', sans-serif;color:#629755;white-space:pre;">AnnotationDependencyMethodInjectionDemo</div>
<svg style="left:134px;top:486px;" width="28" height="28" viewBox="0 0 28 28"><circle cx="14.0" cy="14.0" r="14.0" fill="#4089a6"/><path d="M18.20 10.08 A5.60 5.60 0 1 0 18.20 17.92" fill="none" stroke="#1e3541" stroke-width="2.2"/><path d="M19.88 -1.12 L29.82 5.88 L19.88 12.88 Z" fill="#62b543"/></svg>
<div style="left:171px;top:486.99px;font:normal normal 26px/26px 'Liberation Sans', sans-serif;color:#629755;white-space:pre;">ApiDependencyConstructorInjectionDemo</div>
<svg style="left:134px;top:526px;" width="28" height="28" viewBox="0 0 28 28"><circle cx="14.0" cy="14.0" r="14.0" fill="#4089a6"/><path d="M18.20 10.08 A5.60 5.60 0 1 0 18.20 17.92" fill="none" stroke="#1e3541" stroke-width="2.2"/><path d="M19.88 -1.12 L29.82 5.88 L19.88 12.88 Z" fill="#62b543"/></svg>
<div style="left:171px;top:526.99px;font:normal normal 26px/26px 'Liberation Sans', sans-serif;color:#629755;white-space:pre;">ApiDependencySetterInjectionDemo</div>
<svg style="left:134px;top:566px;" width="28" height="28" viewBox="0 0 28 28"><circle cx="14.0" cy="14.0" r="14.0" fill="#4089a6"/><path d="M18.20 10.08 A5.60 5.60 0 1 0 18.20 17.92" fill="none" stroke="#1e3541" stroke-width="2.2"/><path d="M19.88 -1.12 L29.82 5.88 L19.88 12.88 Z" fill="#62b543"/></svg>
<div style="left:171px;top:566.99px;font:normal normal 26px/26px 'Liberation Sans', sans-serif;color:#629755;white-space:pre;">AutowiringByNameDependencySetterInjectionDemo</div>
<svg style="left:134px;top:606px;" width="28" height="28" viewBox="0 0 28 28"><circle cx="14.0" cy="14.0" r="14.0" fill="#4089a6"/><path d="M18.20 10.08 A5.60 5.60 0 1 0 18.20 17.92" fill="none" stroke="#1e3541" stroke-width="2.2"/><path d="M19.88 -1.12 L29.82 5.88 L19.88 12.88 Z" fill="#62b543"/></svg>
<div style="left:171px;top:606.99px;font:normal normal 26px/26px 'Liberation Sans', sans-serif;color:#629755;white-space:pre;">AutowiringConstructorDependencyConstructorInjectionDemo</div>
<svg style="left:134px;top:646px;" width="28" height="28" viewBox="0 0 28 28"><circle cx="14.0" cy="14.0" r="14.0" fill="#4089a6"/><path d="M18.20 10.08 A5.60 5.60 0 1 0 18.20 17.92" fill="none" stroke="#1e3541" stroke-width="2.2"/><path d="M19.88 -1.12 L29.82 5.88 L19.88 12.88 Z" fill="#62b543"/></svg>
<div style="left:171px;top:646.99px;font:normal normal 26px/26px 'Liberation Sans', sans-serif;color:#629755;white-space:pre;">AwareInterfaceDependencyInjectionDemo</div>
<svg style="left:134px;top:686px;" width="28" height="28" viewBox="0 0 28 28"><circle cx="14.0" cy="14.0" r="14.0" fill="#4089a6"/><path d="M18.20 10.08 A5.60 5.60 0 1 0 18.20 17.92" fill="none" stroke="#1e3541" stroke-width="2.2"/><path d="M19.88 -1.12 L29.82 5.88 L19.88 12.88 Z" fill="#62b543"/></svg>
<div style="left:171px;top:686.99px;font:normal normal 26px/26px 'Liberation Sans', sans-serif;color:#629755;white-space:pre;">LazyAnnotationDependencyInjectionDemo</div>
<svg style="left:134px;top:726px;" width="28" height="28" viewBox="0 0 28 28"><circle cx="14.0" cy="14.0" r="14.0" fill="#4089a6"/><path d="M18.20 10.08 A5.60 5.60 0 1 0 18.20 17.92" fill="none" stroke="#1e3541" stroke-width="2.2"/><path d="M19.88 -1.12 L29.82 5.88 L19.88 12.88 Z" fill="#62b543"/></svg>
<div style="left:171px;top:726.99px;font:normal normal 26px/26px 'Liberation Sans', sans-serif;color:#629755;white-space:pre;">QualifierAnnotationDependencyInjectionDemo</div>
<svg style="left:134px;top:766px;" width="28" height="28" viewBox="0 0 28 28"><circle cx="14.0" cy="14.0" r="14.0" fill="#5a8a3c"/><text x="14.0" y="20.2" text-anchor="middle" font-family="Liberation Sans" font-size="17.4" fill="#203a14">@</text></svg>
<div style="left:171px;top:766.99px;font:normal normal 26px/26px 'Liberation Sans', sans-serif;color:#629755;white-space:pre;">UserGroup</div>
<svg style="left:134px;top:806px;" width="28" height="28" viewBox="0 0 28 28"><circle cx="14.0" cy="14.0" r="14.0" fill="#4089a6"/><path d="M18.20 10.08 A5.60 5.60 0 1 0 18.20 17.92" fill="none" stroke="#1e3541" stroke-width="2.2"/></svg>
<div style="left:171px;top:806.99px;font:normal normal 26px/26px 'Liberation Sans', sans-serif;color:#629755;white-space:pre;">UserHolder</div>
<svg style="left:134px;top:846px;" width="28" height="28" viewBox="0 0 28 28"><circle cx="14.0" cy="14.0" r="14.0" fill="#4089a6"/><path d="M18.20 10.08 A5.60 5.60 0 1 0 18.20 17.92" fill="none" stroke="#1e3541" stroke-width="2.2"/><path d="M19.88 -1.12 L29.82 5.88 L19.88 12.88 Z" fill="#62b543"/></svg>
<div style="left:171px;top:846.99px;font:normal normal 26px/26px 'Liberation Sans', sans-serif;color:#629755;white-space:pre;">XmlDependencyConstructorInjectionDemo</div>
<svg style="left:134px;top:886px;" width="28" height="28" viewBox="0 0 28 28"><circle cx="14.0" cy="14.0" r="14.0" fill="#4089a6"/><path d="M18.20 10.08 A5.60 5.60 0 1 0 18.20 17.92" fill="none" stroke="#1e3541" stroke-width="2.2"/><path d="M19.88 -1.12 L29.82 5.88 L19.88 12.88 Z" fill="#62b543"/></svg>
<div style="left:171px;top:886.99px;font:normal normal 26px/26px 'Liberation Sans', sans-serif;color:#629755;white-space:pre;">XmlDependencySetterInjectionDemo</div>
<svg style="left:27px;top:931px;" width="15" height="18" viewBox="0 0 15 18"><path d="M0 0 L15 9.0 L0 18 Z" fill="#9c9c9c"/></svg>
<svg style="left:62px;top:929px;" width="28" height="22" viewBox="0 0 28 22"><path d="M0 0 H10.6 L14.6 4 H28 V22 H0 Z" fill="#87939a"/><rect x="14" y="12" width="14" height="14" fill="#3c3f41"/><path d="M16 15 H27 M16 19 H27 M16 23 H27" stroke="#e0a030" stroke-width="2.2"/></svg>
<div style="left:99px;top:926.99px;font:normal normal 26px/26px 'Liberation Sans', sans-serif;color:#bbbbbb;white-space:pre;">resources</div>
<svg style="left:-6px;top:974px;" width="12" height="14" viewBox="0 0 12 14"><path d="M0 0 L12 7 L0 14 Z" fill="#9c9c9c"/></svg>
<svg style="left:26px;top:969px;" width="28" height="22" viewBox="0 0 28 22"><path d="M0 0 H10.6 L14.6 4 H28 V22 H0 Z" fill="#87939a"/></svg>
<div style="left:62.5px;top:966.99px;font:normal normal 26px/26px 'Liberation Sans', sans-serif;color:#bbbbbb;white-space:pre;">test</div>
<svg style="left:-14px;top:1010px;" width="32" height="20" viewBox="0 0 32 20"><path d="M0 0 H12 L15 3 H32 V20 H0 Z" fill="#c8642f"/></svg>
<div style="left:27px;top:1006.99px;font:normal normal 26px/26px 'Liberation Sans', sans-serif;color:#bbbbbb;white-space:pre;">target</div>
<div style="left:254px;top:3px;width:16px;height:168px;background:rgba(255,255,255,0.14);"></div>
<div style="left:29px;top:1031px;width:57px;height:9px;background:rgba(190,190,190,0.28);"></div>
</div>
<div style="left:56px;top:1226.99px;font:normal normal 26px/26px 'Liberation Sans', sans-serif;color:#bbbbbb;white-space:pre;">Debug:</div>
<svg style="left:178px;top:1222px;" width="34" height="34" viewBox="0 0 34 34"><path d="M6 2 H29.8 V22.4" fill="none" stroke="#7d8184" stroke-width="2.2"/><rect x="6" y="2" width="23.8" height="4" fill="#7d8184"/><rect x="2" y="8" width="23.9" height="20" fill="#7d8184"/><rect x="4" y="12" width="19.9" height="14" fill="#36393b"/><rect x="6" y="14" width="16" height="10" fill="#3d8fb5"/><circle cx="28" cy="28" r="4.3" fill="#00f000" stroke="#2b2b2b" stroke-width="1.2"/></svg>
<div style="left:218px;top:1226.99px;font:normal normal 26px/26px 'Liberation Sans', sans-serif;color:#bbbbbb;white-space:pre;letter-spacing:-0.026px;">AnnotationDependencyInjectionResolutio...</div>
<svg style="left:730px;top:1232px;" width="16" height="16" viewBox="0 0 16 16"><path d="M1 1 L15 15 M15 1 L1 15" stroke="#6f7173" stroke-width="2"/></svg>
<div style="left:154px;top:1260px;width:614px;height:5px;background:#747a80;"></div>
<div style="left:44px;top:1265px;width:2796px;height:2px;background:#2f3133;"></div>
<svg style="left:2749px;top:1224px;" width="28" height="28" viewBox="0 0 28 28"><path fill="#afb1b3" fill-rule="evenodd" d="M10.32 4.36 L10.41 1.26 L15.59 1.26 L15.68 4.36 L20.01 6.86 L22.74 5.39 L25.33 9.87 L22.68 11.50 L22.68 16.50 L25.33 18.13 L22.74 22.61 L20.01 21.14 L15.68 23.64 L15.59 26.74 L10.41 26.74 L10.32 23.64 L5.99 21.14 L3.26 22.61 L0.67 18.13 L3.32 16.50 L3.32 11.50 L0.67 9.87 L3.26 5.39 L5.99 6.86 Z M13 9.2 A4.8 4.8 0 1 0 13 18.8 A4.8 4.8 0 1 0 13 9.2 Z"/></svg>
<div style="left:2802px;top:1236px;width:24px;height:4px;background:#afb1b3;"></div>
<div style="left:100px;top:1267px;width:2px;height:354px;background:#2f3133;"></div>
<svg style="left:58px;top:1278px;" width="32" height="32" viewBox="0 0 32 32"><path d="M76 1289 A9.5 9.5 0 1 0 79 1301" transform="translate(-58 -1278)" fill="none" stroke="#499c54" stroke-width="3.6"/><path d="M17.5 2.6 L28 9.7 L17.5 16.8 Z" fill="#499c54"/><rect x="16.4" y="20" width="9.4" height="9.8" fill="#afb1b3"/></svg>
<div style="left:52px;top:1326px;width:40px;height:2px;background:#4b4e50;"></div>
<svg style="left:61px;top:1347px;" width="25" height="25" viewBox="0 0 25 25"><rect x="0" y="1" width="5" height="22" fill="#499c54"/><path d="M8 1 L24 12 L8 23 Z" fill="#499c54"/></svg>
<svg style="left:63px;top:1400px;" width="20" height="22" viewBox="0 0 20 22"><rect x="0.7" y="0" width="4.8" height="22" fill="#5f6264"/><rect x="11.4" y="0" width="5.9" height="22" fill="#5f6264"/></svg>
<div style="left:62px;top:1454px;width:20px;height:21px;background:#c75450;"></div>
<div style="left:52px;top:1496px;width:40px;height:2px;background:#4b4e50;"></div>
<svg style="left:59px;top:1514px;" width="28" height="28" viewBox="0 0 28 28"><circle cx="9" cy="18" r="9" fill="#c75450"/><circle cx="18" cy="10" r="9" fill="#c75450" stroke="#3c3f41" stroke-width="2"/></svg>
<div style="left:64px;top:1587.68px;font:normal normal 24px/24px 'Liberation Sans', sans-serif;color:#bbbbbb;white-space:pre;">»</div>
<div style="left:129px;top:1280.99px;font:normal normal 26px/26px 'Liberation Sans', sans-serif;color:#bbbbbb;white-space:pre;letter-spacing:-1.145px;">Debugger</div>
<div style="left:102px;top:1317px;width:158px;height:4px;background:#747a80;"></div>
<svg style="left:286px;top:1284px;" width="24" height="22" viewBox="0 0 24 22"><rect x="0" y="0" width="24" height="24" fill="#afb1b3"/><path d="M8 6 L14 12 L8 18" fill="none" stroke="#3c3f41" stroke-width="3"/></svg>
<div style="left:322px;top:1280.99px;font:normal normal 26px/26px 'Liberation Sans', sans-serif;color:#bbbbbb;white-space:pre;letter-spacing:-1.482px;">Console</div>
<svg style="left:438px;top:1282px;" width="24" height="24" viewBox="0 0 24 24"><rect x="0" y="0" width="24" height="4" fill="#afb1b3"/><rect x="0" y="8" width="24" height="6" fill="#3592c4"/><rect x="0" y="18" width="24" height="4" fill="#afb1b3"/></svg>
<div style="left:482px;top:1272px;width:2px;height:40px;background:#4b4e50;"></div>
<svg style="left:502px;top:1278px;" width="28" height="28" viewBox="0 0 28 28"><path d="M2 14 L10 5 L18 13 L22 9" fill="none" stroke="#3592c4" stroke-width="3.2"/><path d="M16 8 H26 V18 Z" fill="#3592c4"/><rect x="2" y="22" width="24" height="3.5" fill="#afb1b3"/></svg>
<svg style="left:556px;top:1278px;" width="24" height="28" viewBox="0 0 24 28"><path d="M12 0 V14" stroke="#3592c4" stroke-width="3.2"/><path d="M4 10 H20 L12 19 Z" fill="#3592c4"/><rect x="0" y="22" width="24" height="3.5" fill="#afb1b3"/></svg>
<svg style="left:608px;top:1278px;" width="24" height="28" viewBox="0 0 24 28"><path d="M12 0 V14" stroke="#c75450" stroke-width="3.2"/><path d="M4 10 H20 L12 19 Z" fill="#c75450"/><rect x="0" y="22" width="24" height="3.5" fill="#afb1b3"/></svg>
<svg style="left:660px;top:1278px;" width="24" height="28" viewBox="0 0 24 28"><path d="M12 6 V20" stroke="#3592c4" stroke-width="3.2"/><path d="M4 10 H20 L12 1 Z" fill="#3592c4"/><rect x="0" y="22" width="24" height="3.5" fill="#afb1b3"/></svg>
<svg style="left:711px;top:1278px;" width="27" height="28" viewBox="0 0 27 28"><path d="M1.5 1.5 L12 12 M12 1.5 L1.5 12" stroke="#c75450" stroke-width="3.2"/><path d="M16.5 7.5 H23.5 V25.5 H7.5 V16.5" fill="none" stroke="#afb1b3" stroke-width="2.8"/></svg>
<svg style="left:762px;top:1278px;" width="30" height="30" viewBox="0 0 30 30"><path d="M1.5 1.5 L11 11" stroke="#3592c4" stroke-width="3.2"/><path d="M1 15 H15 V1 Z" fill="#3592c4"/><path d="M17 12 H27 M22 12 V28 M17 28 H27" stroke="#afb1b3" stroke-width="1.8"/></svg>
<div style="left:809px;top:1272px;width:2px;height:40px;background:#4b4e50;"></div>
<svg style="left:830px;top:1280px;" width="24" height="24" viewBox="0 0 24 24"><rect x="0" y="0" width="24" height="24" fill="#afb1b3"/><rect x="3" y="3" width="18" height="4" fill="#3c3f41"/><rect x="3" y="10" width="4" height="4" fill="#3c3f41"/><rect x="10" y="10" width="4" height="4" fill="#3c3f41"/><rect x="17" y="10" width="4" height="4" fill="#3c3f41"/><rect x="3" y="17" width="4" height="4" fill="#3c3f41"/><rect x="10" y="17" width="4" height="4" fill="#3c3f41"/><rect x="17" y="17" width="4" height="4" fill="#3c3f41"/></svg>
<svg style="left:881px;top:1282px;" width="26" height="22" viewBox="0 0 26 22"><path d="M0 2 H24 M0 10 H24 M0 18 H24" stroke="#5b5e60" stroke-width="4"/><path d="M8 22 L18 0" stroke="#3c3f41" stroke-width="3"/></svg>
<svg style="left:2800px;top:1282px;" width="26" height="30" viewBox="0 0 26 30"><rect x="0" y="0" width="11" height="10" fill="#afb1b3"/><rect x="13" y="0" width="11" height="10" fill="#afb1b3"/><rect x="0" y="12" width="24" height="10" fill="#afb1b3"/><path d="M16 24 H26 L21 29 Z" fill="#ddd"/></svg>
<div style="left:102px;top:1321px;width:2738px;height:2px;background:#2f3133;"></div>
<div style="left:129px;top:1334.99px;font:normal normal 26px/26px 'Liberation Sans', sans-serif;color:#bbbbbb;white-space:pre;letter-spacing:-2.349px;">Frames</div>
<div style="left:572.4px;top:1334.99px;font:normal normal 26px/26px 'Liberation Sans', sans-serif;color:#bbbbbb;white-space:pre;letter-spacing:-1.384px;">Variables</div>
<div style="left:544px;top:1323px;width:2px;height:298px;background:#2f3133;"></div>
<div style="left:102px;top:1374px;width:2738px;height:2px;background:#2f3133;"></div>
<div style="left:108px;top:1382px;width:263px;height:45px;border:2px solid #5e6060;border-radius:6px;"></div>
<svg style="left:124px;top:1394px;" width="29" height="24" viewBox="0 0 29 24"><path d="M2 12 L10 21 L27 2" fill="none" stroke="#d9742e" stroke-width="4.5"/></svg>
<div style="left:162px;top:1392.99px;font:normal normal 26px/26px 'Liberation Sans', sans-serif;color:#bbbbbb;white-space:pre;">"mai...NNING</div>
<svg style="left:341px;top:1401px;" width="19" height="11" viewBox="0 0 19 11"><path d="M0 0 H19 L9.5 11 Z" fill="#a6a6a6"/></svg>
<svg style="left:399px;top:1393px;" width="22" height="26" viewBox="0 0 22 26"><path d="M11 26 V3 M2 12 L11 2 L20 12" fill="none" stroke="#5b5e60" stroke-width="3"/></svg>
<svg style="left:450px;top:1393px;" width="22" height="26" viewBox="0 0 22 26"><path d="M11 0 V23 M2 14 L11 24 L20 14" fill="none" stroke="#afb1b3" stroke-width="3"/></svg>
<svg style="left:501px;top:1394px;" width="26" height="26" viewBox="0 0 26 26"><path d="M0 1 H26 L16 12 V25 H10 V12 Z" fill="#afb1b3"/></svg>
<div style="left:102px;top:1436px;width:442px;height:2px;background:#2f3133;"></div>
<div style="left:102px;top:1438px;width:442px;height:2px;background:#3c3f41;"></div>
<div style="left:102px;top:1440px;width:442px;height:181px;background:#4c493e;"></div>
<div style="left:102px;top:1440px;width:442px;height:42px;background:#4b6eaf;"></div>
<div style="left:134.7px;top:1447.99px;font:normal normal 26px/26px 'Liberation Sans', sans-serif;color:#bbbbbb;white-space:pre;width:409px;overflow:hidden;">inject:108, InjectionMetadata <i>(org.springframework.beans.factory.annotation)</i></div>
<div style="left:134.7px;top:1489.99px;font:normal normal 26px/26px 'Liberation Sans', sans-serif;color:#7f7f7f;white-space:pre;letter-spacing:-0.38px;width:409px;overflow:hidden;">postProcessProperties:399, AutowiredAnnotationBeanPostProcessor</div>
<div style="left:134.7px;top:1531.99px;font:normal normal 26px/26px 'Liberation Sans', sans-serif;color:#7f7f7f;white-space:pre;letter-spacing:-0.38px;width:409px;overflow:hidden;">populateBean:1422, AbstractAutowireCapableBeanFactory</div>
<div style="left:134.7px;top:1573.99px;font:normal normal 26px/26px 'Liberation Sans', sans-serif;color:#7f7f7f;white-space:pre;letter-spacing:-0.38px;width:409px;overflow:hidden;">doCreateBean:594, AbstractAutowireCapableBeanFactory</div>
<div style="left:525px;top:1441px;width:17px;height:50px;background:rgba(200,200,200,0.22);"></div>
<div style="left:104px;top:1602px;width:126px;height:16px;background:rgba(200,200,200,0.22);"></div>
<div style="left:594px;top:1376px;width:2px;height:245px;background:#2f3133;"></div>
<svg style="left:559px;top:1392px;" width="22" height="22" viewBox="0 0 22 22"><path d="M11 0 V22 M0 11 H22" stroke="#afb1b3" stroke-width="3.5"/></svg>
<div style="left:560px;top:1453px;width:21px;height:3px;background:#5b5e60;"></div>
<svg style="left:559px;top:1500px;" width="22" height="12" viewBox="0 0 22 12"><path d="M0 12 L11 0 L22 12 Z" fill="#5b5e60"/></svg>
<svg style="left:559px;top:1551px;" width="22" height="12" viewBox="0 0 22 12"><path d="M0 0 L11 12 L22 0 Z" fill="#5b5e60"/></svg>
<div style="left:563px;top:1591.68px;font:normal normal 24px/24px 'Liberation Sans', sans-serif;color:#bbbbbb;white-space:pre;">»</div>
<svg style="left:601px;top:1389px;" width="17" height="19" viewBox="0 0 17 19"><path d="M0 0 L17 9.5 L0 19 Z" fill="#9c9c9c"/></svg>
<svg style="left:637px;top:1387px;" width="29" height="23" viewBox="0 0 29 23"><rect x="0" y="0" width="29" height="6" fill="#b0873f"/><rect x="0" y="8.5" width="29" height="6" fill="#b0873f"/><rect x="0" y="17" width="29" height="6" fill="#b0873f"/></svg>
<div style="left:674.8px;top:1384.99px;font:normal normal 26px/26px 'Liberation Sans', sans-serif;color:#bbbbbb;white-space:pre;letter-spacing:-0.004px;"><span style="color:#f28b80">this</span><span style="color:#bbbbbb"> = </span><span style="color:#8e8e8e">{InjectionMetadata@2194}</span></div>
<svg style="left:601px;top:1429px;" width="17" height="19" viewBox="0 0 17 19"><path d="M0 0 L17 9.5 L0 19 Z" fill="#9c9c9c"/></svg>
<svg style="left:637px;top:1424px;" width="29" height="29" viewBox="0 0 29 29"><circle cx="14.5" cy="14.5" r="14" fill="#a98240"/><text x="14.5" y="21" text-anchor="middle" font-family="Liberation Sans" font-size="21" fill="#3a2e1b">p</text></svg>
<div style="left:674.8px;top:1424.99px;font:normal normal 26px/26px 'Liberation Sans', sans-serif;color:#bbbbbb;white-space:pre;letter-spacing:-0.208px;"><span style="color:#f28b80">target</span><span style="color:#bbbbbb"> = </span><span style="color:#8e8e8e">{AnnotationDependencyInjectionResolutionDemo$$EnhancerBySpringCGLIB$$9475d71@2207}</span></div>
<svg style="left:601px;top:1469px;" width="17" height="19" viewBox="0 0 17 19"><path d="M0 0 L17 9.5 L0 19 Z" fill="#9c9c9c"/></svg>
<svg style="left:637px;top:1464px;" width="29" height="29" viewBox="0 0 29 29"><circle cx="14.5" cy="14.5" r="14" fill="#a98240"/><text x="14.5" y="21" text-anchor="middle" font-family="Liberation Sans" font-size="21" fill="#3a2e1b">p</text></svg>
<div style="left:674.8px;top:1464.99px;font:normal normal 26px/26px 'Liberation Sans', sans-serif;color:#bbbbbb;white-space:pre;letter-spacing:0.083px;"><span style="color:#f28b80">beanName</span><span style="color:#bbbbbb"> = </span><span style="color:#6a8759">"annotationDependencyInjectionResolutionDemo"</span></div>
<svg style="left:601px;top:1509px;" width="17" height="19" viewBox="0 0 17 19"><path d="M0 0 L17 9.5 L0 19 Z" fill="#9c9c9c"/></svg>
<svg style="left:637px;top:1504px;" width="29" height="29" viewBox="0 0 29 29"><circle cx="14.5" cy="14.5" r="14" fill="#a98240"/><text x="14.5" y="21" text-anchor="middle" font-family="Liberation Sans" font-size="21" fill="#3a2e1b">p</text></svg>
<div style="left:674.8px;top:1504.99px;font:normal normal 26px/26px 'Liberation Sans', sans-serif;color:#bbbbbb;white-space:pre;letter-spacing:-0.023px;"><span style="color:#f28b80">pvs</span><span style="color:#bbbbbb"> = </span><span style="color:#8e8e8e">{MutablePropertyValues@2216}</span><span style="color:#bbbbbb"> "PropertyValues: length=0"</span></div>
<svg style="left:601px;top:1549px;" width="17" height="19" viewBox="0 0 17 19"><path d="M0 0 L17 9.5 L0 19 Z" fill="#9c9c9c"/></svg>
<svg style="left:635px;top:1550px;" width="32" height="16" viewBox="0 0 32 16"><circle cx="8" cy="8" r="6" fill="none" stroke="#9aa7b0" stroke-width="3"/><circle cx="24" cy="8" r="6" fill="none" stroke="#9aa7b0" stroke-width="3"/><path d="M14 7 H18" stroke="#9aa7b0" stroke-width="3"/></svg>
<div style="left:674.8px;top:1544.99px;font:normal normal 26px/26px 'Liberation Sans', sans-serif;color:#bbbbbb;white-space:pre;letter-spacing:-0.283px;"><span style="color:#f28b80">this.injectedElements</span><span style="color:#bbbbbb"> = </span><span style="color:#8e8e8e">{ArrayList@2270}</span><span style="color:#bbbbbb">  size = 1</span></div>
<svg style="left:601px;top:1589px;" width="17" height="19" viewBox="0 0 17 19"><path d="M0 0 L17 9.5 L0 19 Z" fill="#9c9c9c"/></svg>
<svg style="left:635px;top:1590px;" width="32" height="16" viewBox="0 0 32 16"><circle cx="8" cy="8" r="6" fill="none" stroke="#9aa7b0" stroke-width="3"/><circle cx="24" cy="8" r="6" fill="none" stroke="#9aa7b0" stroke-width="3"/><path d="M14 7 H18" stroke="#9aa7b0" stroke-width="3"/></svg>
<div style="left:674.8px;top:1584.99px;font:normal normal 26px/26px 'Liberation Sans', sans-serif;color:#bbbbbb;white-space:pre;letter-spacing:-0.345px;"><span style="color:#f28b80">this.checkedElements</span><span style="color:#bbbbbb"> = </span><span style="color:#8e8e8e">{LinkedHashSet@2272}</span><span style="color:#bbbbbb">  size = 1</span></div>
<div style="left:170px;top:1623px;width:171px;height:41px;background:#2d2f30;"></div>
<svg style="left:65px;top:1633px;" width="26" height="26" viewBox="0 0 26 26"><rect x="0" y="1" width="4.5" height="23" fill="#afb1b3"/><rect x="0" y="16.5" width="17" height="4" fill="#afb1b3"/><rect x="12.5" y="8" width="4.5" height="12" fill="#afb1b3"/><path d="M8.3 9.5 L14.75 1.5 L21.2 9.5 Z" fill="#afb1b3"/></svg>
<div style="left:96.5px;top:1630.99px;font:normal normal 26px/26px 'Liberation Sans', sans-serif;color:#bbbbbb;white-space:pre;letter-spacing:-1.435px;"><u>9</u>: Git</div>
<svg style="left:193px;top:1630px;transform:scale(0.82);transform-origin:0 0;" width="32" height="34" viewBox="0 0 32 34"><path d="M8.4 3.2 L14 6.8 L19.6 3.2" fill="none" stroke="#afb1b3" stroke-width="3"/><ellipse cx="14.5" cy="18.5" rx="8.5" ry="11.2" fill="#afb1b3"/><rect x="2" y="10.6" width="24.5" height="3.4" fill="#afb1b3"/><rect x="2" y="17" width="24.5" height="3.1" fill="#afb1b3"/><rect x="2" y="23.7" width="24.5" height="3.3" fill="#afb1b3"/><rect x="10.4" y="14.2" width="7.2" height="2.7" fill="#afb1b3"/><rect x="10.4" y="20.4" width="7.2" height="2.5" fill="#afb1b3"/><circle cx="26.2" cy="27.9" r="4.3" fill="#00f000" stroke="#2b2b2b" stroke-width="1.2"/></svg>
<div style="left:227px;top:1630.99px;font:normal normal 26px/26px 'Liberation Sans', sans-serif;color:#d8d8d8;white-space:pre;letter-spacing:-1.461px;"><u>5</u>: Debug</div>
<svg style="left:368px;top:1634px;" width="20" height="20" viewBox="0 0 20 20"><path d="M0 2 H4 M7 2 H20 M0 10 H4 M7 10 H20 M0 18 H4 M7 18 H20" stroke="#afb1b3" stroke-width="3"/></svg>
<div style="left:398px;top:1630.99px;font:normal normal 26px/26px 'Liberation Sans', sans-serif;color:#bbbbbb;white-space:pre;letter-spacing:-1.95px;"><u>6</u>: TODO</div>
<svg style="left:530px;top:1633px;" width="24" height="24" viewBox="0 0 24 24"><path d="M2 22 C0 10 10 2 23 1 C23 14 16 22 4 21 C8 15 12 12 16 9" fill="#afb1b3"/></svg>
<div style="left:564px;top:1630.99px;font:normal normal 26px/26px 'Liberation Sans', sans-serif;color:#bbbbbb;white-space:pre;letter-spacing:-1.273px;">Spring</div>
<svg style="left:678px;top:1634px;" width="22" height="20" viewBox="0 0 22 20"><rect x="0" y="0" width="22" height="20" fill="#afb1b3"/><path d="M4 5 L9 10 L4 15 M11 16 H18" fill="none" stroke="#3c3f41" stroke-width="2.2"/></svg>
<div style="left:711px;top:1630.99px;font:normal normal 26px/26px 'Liberation Sans', sans-serif;color:#bbbbbb;white-space:pre;letter-spacing:-1.029px;">Terminal</div>
<svg style="left:2682px;top:1633px;" width="26" height="26" viewBox="0 0 26 26"><circle cx="13" cy="13" r="11" fill="none" stroke="#afb1b3" stroke-width="2.5"/></svg>
<div style="left:2717px;top:1630.99px;font:normal normal 26px/26px 'Liberation Sans', sans-serif;color:#bbbbbb;white-space:pre;letter-spacing:-1.672px;">Event Log</div>
<svg style="left:12px;top:1674px;" width="25" height="25" viewBox="0 0 25 25"><rect x="6" y="1" width="18" height="18" fill="none" stroke="#9c9c9c" stroke-width="2"/><path d="M1 6 V24 H19" fill="none" stroke="#9c9c9c" stroke-width="2"/></svg>
<div style="left:54.6px;top:1672.99px;font:normal normal 26px/26px 'Liberation Sans', sans-serif;color:#bbbbbb;white-space:pre;">All files are up-to-date (15 minutes ago)</div>
<div style="left:2351px;top:1672.99px;font:normal normal 26px/26px 'Liberation Sans', sans-serif;color:#bbbbbb;white-space:pre;letter-spacing:-1.406px;">108:1</div>
<div style="left:2436.6px;top:1672.99px;font:normal normal 26px/26px 'Liberation Sans', sans-serif;color:#8c8c8c;white-space:pre;letter-spacing:-3.164px;">LF</div>
<div style="left:2487.5px;top:1672.99px;font:normal normal 26px/26px 'Liberation Sans', sans-serif;color:#8c8c8c;white-space:pre;">UTF-8</div>
<svg style="left:459px;top:394px;" width="23" height="30" viewBox="0 0 23 30"><path d="M1 1 H21 V18 L11 28 L1 18 Z" fill="#2b2b2b" stroke="#5a5a5a" stroke-width="2"/><path d="M6 10 H16" stroke="#5a5a5a" stroke-width="2"/></svg>
<svg style="left:459px;top:602px;" width="23" height="30" viewBox="0 0 23 30"><path d="M1 1 H21 V18 L11 28 L1 18 Z" fill="#2b2b2b" stroke="#5a5a5a" stroke-width="2"/><path d="M6 10 H16" stroke="#5a5a5a" stroke-width="2"/></svg>
<svg style="left:459px;top:654px;" width="23" height="30" viewBox="0 0 23 30"><path d="M1 1 H21 V18 L11 28 L1 18 Z" fill="#2b2b2b" stroke="#5a5a5a" stroke-width="2"/><path d="M6 10 H16" stroke="#5a5a5a" stroke-width="2"/></svg>
<svg style="left:459px;top:706px;" width="23" height="30" viewBox="0 0 23 30"><path d="M1 1 H21 V18 L11 28 L1 18 Z" fill="#2b2b2b" stroke="#5a5a5a" stroke-width="2"/><path d="M6 10 H16" stroke="#5a5a5a" stroke-width="2"/></svg>
<svg style="left:459px;top:1122px;" width="23" height="30" viewBox="0 0 23 30"><path d="M1 1 H21 V18 L11 28 L1 18 Z" fill="#2b2b2b" stroke="#5a5a5a" stroke-width="2"/><path d="M6 10 H16" stroke="#5a5a5a" stroke-width="2"/></svg>
<svg style="left:459px;top:180px;" width="23" height="30" viewBox="0 0 23 30"><path d="M1 11 L11 1 L21 11 V28 H1 Z" fill="#2b2b2b" stroke="#5a5a5a" stroke-width="2"/><path d="M6 19 H16" stroke="#5a5a5a" stroke-width="2"/></svg>
<svg style="left:459px;top:284px;" width="23" height="30" viewBox="0 0 23 30"><path d="M1 11 L11 1 L21 11 V28 H1 Z" fill="#2b2b2b" stroke="#5a5a5a" stroke-width="2"/><path d="M6 19 H16" stroke="#5a5a5a" stroke-width="2"/></svg>
<svg style="left:459px;top:804px;" width="23" height="30" viewBox="0 0 23 30"><path d="M1 11 L11 1 L21 11 V28 H1 Z" fill="#2b2b2b" stroke="#5a5a5a" stroke-width="2"/><path d="M6 19 H16" stroke="#5a5a5a" stroke-width="2"/></svg>
<svg style="left:459px;top:908px;" width="23" height="30" viewBox="0 0 23 30"><path d="M1 11 L11 1 L21 11 V28 H1 Z" fill="#2b2b2b" stroke="#5a5a5a" stroke-width="2"/><path d="M6 19 H16" stroke="#5a5a5a" stroke-width="2"/></svg>
<svg style="left:459px;top:960px;" width="23" height="30" viewBox="0 0 23 30"><path d="M1 11 L11 1 L21 11 V28 H1 Z" fill="#2b2b2b" stroke="#5a5a5a" stroke-width="2"/><path d="M6 19 H16" stroke="#5a5a5a" stroke-width="2"/></svg>
<svg style="left:459px;top:1012px;" width="23" height="30" viewBox="0 0 23 30"><path d="M1 11 L11 1 L21 11 V28 H1 Z" fill="#2b2b2b" stroke="#5a5a5a" stroke-width="2"/><path d="M6 19 H16" stroke="#5a5a5a" stroke-width="2"/></svg>
<svg style="left:405px;top:386px;" width="34" height="36" viewBox="0 0 34 36"><circle cx="11.5" cy="17.5" r="10.5" fill="#3d9ac0"/><circle cx="11.5" cy="17.5" r="4.5" fill="none" stroke="#1d3d4a" stroke-width="2.2"/><path d="M25.5 2 V30" stroke="#b5b5b5" stroke-width="2.6"/><path d="M19 27 H32 L25.5 34 Z" fill="#b5b5b5"/></svg>
<svg style="left:405px;top:437px;" width="36" height="34" viewBox="0 0 36 34"><circle cx="17" cy="19" r="14.3" fill="#c75450"/><path d="M14.5 9.5 L20 15.5 L32 3.5" fill="none" stroke="#2b2b2b" stroke-width="6"/><path d="M14.5 9.5 L20 15.5 L32 3.5" fill="none" stroke="#bdbdbd" stroke-width="3.2"/></svg>
<svg style="left:405px;top:1119px;" width="30" height="24" viewBox="0 0 30 24"><path d="M2 0 V24" stroke="#6d7073" stroke-width="3"/><path d="M9 3 H29 M9 11 H29 M9 19 H21" stroke="#6d7073" stroke-width="3.2"/></svg>
<div style="left:484px;top:436px;width:4px;height:42px;background:#bbbbbb;"></div>
<svg style="left:501px;top:436px;" width="22" height="29" viewBox="0 0 22 29"><path d="M11 0 A10 10 0 0 1 21 10 C21 15 17 17 16 21 H6 C5 17 1 15 1 10 A10 10 0 0 1 11 0 Z" fill="#f0a732"/><path d="M6 23.5 H16 M7 27.5 H15" stroke="#bbbbbb" stroke-width="2"/></svg>
<svg style="left:2815px;top:174px;" width="24" height="19" viewBox="0 0 24 19"><path d="M2 10 L8.5 16 L22 2.5" fill="none" stroke="#499c54" stroke-width="4.2"/></svg>
<div style="left:2822px;top:486px;width:16px;height:68px;background:#4a4a4a;"></div>
<div style="left:2812px;top:501px;width:28px;height:3px;background:#8a4c3c;"></div>
<div style="left:486px;top:1193px;width:960px;height:14px;background:#4a4a4a;"></div>
<svg style="left:0px;top:0px;" width="1" height="1" viewBox="0 0 1 1"></svg>
<svg style="left:0;top:0;" width="2880" height="1706" viewBox="0 0 2880 1706"><path d="M869.5 256 L871 256.5 L865.5 364 L870 364 L861 379 L854 363 L858 363.5 Z" fill="#fb3a3a"/><path d="M1590 314.5 L1591.5 315.5 L1722.4 214.4 L1725 217 L1733 200 L1714.8 204 L1716.8 206.5 Z" fill="#fb3a3a"/></svg>
<div style="left:2545px;top:1652px;width:333px;height:50px;background:#ffffff;border:1.5px solid #c9d5e2;border-radius:3px;"></div>
<svg style="left:2524px;top:1643px;" width="66" height="62" viewBox="0 0 66 62"><defs><linearGradient id="sg" x1="0" y1="0" x2="0" y2="1"><stop offset="0" stop-color="#f57a3c"/><stop offset="1" stop-color="#e84e1a"/></linearGradient></defs><path d="M6 13 L45 1 C48 0 51 1 52 4 L64 43 C65 46 63 49 60 50 L21 61 C18 62 15 60 14 57 L1 19 C0 16 2 14 6 13 Z" fill="url(#sg)"/><path d="M48 16 C38 12 22 14 18 22 C14 31 40 27 41 35 C42 42 25 45 14 42" fill="none" stroke="#fff" stroke-width="8" stroke-linecap="round"/></svg>
<svg style="left:2601px;top:1665px;" width="28" height="28" viewBox="0 0 28 28"><rect x="2" y="6" width="24" height="12" rx="2" fill="none" stroke="#0b6fd6" stroke-width="3.5"/><path d="M14 0 V28" stroke="#0b6fd6" stroke-width="3.5"/></svg>
<svg style="left:2652px;top:1663px;" width="26" height="30" viewBox="0 0 26 30"><circle cx="5" cy="5" r="4" fill="#0b6fd6"/><circle cx="19" cy="16" r="4.5" fill="#0b6fd6"/></svg>
<svg style="left:2698px;top:1662px;" width="26" height="32" viewBox="0 0 26 32"><rect x="8" y="0" width="10" height="20" rx="5" fill="#0b6fd6"/><path d="M3 14 C3 26 23 26 23 14 M13 24 V31" fill="none" stroke="#0b6fd6" stroke-width="3"/></svg>
<svg style="left:2745px;top:1666px;" width="30" height="24" viewBox="0 0 30 24"><rect x="1" y="1" width="28" height="22" rx="3" fill="none" stroke="#0b6fd6" stroke-width="3"/><path d="M5 7 H25 M5 12 H25 M8 17 H22" stroke="#0b6fd6" stroke-width="3" stroke-dasharray="3 1.5"/></svg>
<svg style="left:2793px;top:1666px;" width="30" height="26" viewBox="0 0 30 26"><path d="M9 0 C11 4 19 4 21 0 L30 5 L27 11 L23 9 V26 H7 V9 L3 11 L0 5 Z" fill="#0b6fd6"/></svg>
<svg style="left:2842px;top:1664px;" width="28" height="28" viewBox="0 0 28 28"><rect x="0" y="0" width="12" height="12" rx="3" fill="#6b6cf0"/><rect x="15" y="0" width="12" height="12" rx="3" fill="none" stroke="#5b7cf0" stroke-width="3"/><rect x="0" y="15" width="12" height="12" rx="3" fill="#c35fd6"/><rect x="15" y="15" width="12" height="12" rx="3" fill="#5b7cf0"/></svg>
<div style="left:2655px;top:1676.22px;font:normal normal 21px/21px 'Liberation Sans', sans-serif;color:rgba(120,120,120,0.85);white-space:pre;letter-spacing:-2.776px;">CSDN @</div>
<svg style="left:2730px;top:1675px;transform:scale(0.92,1);transform-origin:0 0;" width="150" height="22" viewBox="0 0 150 22"><path d="M3 2 H17 V11 H3 Z M6 13 L2 20 M14 13 L18 20" fill="none" stroke="rgba(120,120,120,0.85)" stroke-width="1.6"/><path d="M23 1 H39 V20 H23 Z M25 7 H37 M31 3 V12 L26 17 M31 12 L36 17" fill="none" stroke="rgba(120,120,120,0.85)" stroke-width="1.6"/><path d="M45 6 H60 L58 20 H54 M52 1 C52 10 49 16 43 20 M47 3 L49 5 M48 12 L50 14" fill="none" stroke="rgba(120,120,120,0.85)" stroke-width="1.6"/><path d="M68 1 L64 10 M66 6 V20 M71 4 H82 M76 4 V20 M72 10 L70 16 M80 10 L83 16" fill="none" stroke="rgba(120,120,120,0.85)" stroke-width="1.6"/><path d="M86 3 H104 M95 3 V7 M87 7 H103 V20 M87 7 V20 M91 7 V17 M99 7 V17" fill="none" stroke="rgba(120,120,120,0.85)" stroke-width="1.6"/><path d="M108 3 L110 5 M108 10 L110 12 M107 19 L110 14 M113 2 H125 V9 H113 Z M112 12 H126 V19 H112 Z M116 12 V19 M121 12 V19 M111 20 H127" fill="none" stroke="rgba(120,120,120,0.85)" stroke-width="1.6"/><path d="M131 2 H146 M138 2 V8 M131 8 H147 M132 8 L135 12 M146 8 L143 12 M130 14 H148 M139 10 V21 M138 15 L131 20 M140 15 L148 20" fill="none" stroke="rgba(120,120,120,0.85)" stroke-width="1.6"/></svg></body></html>
